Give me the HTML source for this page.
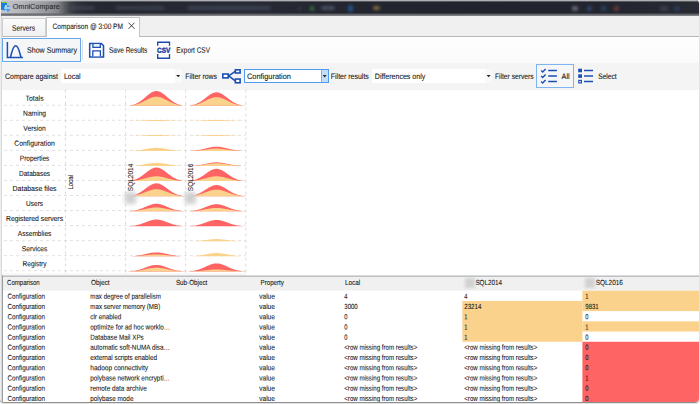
<!DOCTYPE html>
<html><head><meta charset="utf-8"><title>OmniCompare</title>
<style>
html,body{margin:0;padding:0;background:#fff;}
body{width:700px;height:404px;overflow:hidden;position:relative;font-family:"Liberation Sans",sans-serif;}
.win{position:absolute;left:0;top:0;width:699px;height:402px;border-radius:4px;overflow:hidden;background:#f0f0f0;box-shadow:0 0.3px 1.6px rgba(0,0,0,.55);}
.abs{position:absolute;}
.t{position:absolute;left:0;top:0;white-space:nowrap;line-height:12px;height:12px;transform-origin:0 0;-webkit-text-stroke:0.08px currentColor;}
svg{position:absolute;left:0;top:0;overflow:visible;}
</style></head><body>
<div class="win">

<div class="abs" style="left:0;top:0;width:700px;height:14.6px;background:linear-gradient(90deg,#c6c7ca 0px,#bbbcc0 14px,#a6a7ab 36px,#909196 52px,#83848a 58px,#5f6067 64px,#404249 70px,#2f313a 77px,#282a33 86px,#262831 100px,#252730 130px,#272b36 240px,#23262f 330px,#22242d 470px,#23252e 600px,#282b33 700px);"></div>
<div class="abs" style="left:0;top:0;width:700px;height:2px;background:linear-gradient(180deg,rgba(215,215,218,.95) 0,rgba(190,190,195,.75) 45%,rgba(150,150,155,0) 100%);"></div>
<div class="abs" style="left:0;top:12.6px;width:700px;height:3.3px;background:linear-gradient(180deg,rgba(90,92,98,0) 0,rgba(92,94,100,.85) 30%,#707176 70%,#8a8b8f 92%,#c0c0c0 100%);"></div>
<div class="abs" style="left:71.0px;top:5.55px;width:24px;height:4.5px;background:rgba(80,84,104,.45);filter:blur(1.5px);border-radius:2px;"></div>
<div class="abs" style="left:115.0px;top:5.55px;width:50px;height:4.5px;background:rgba(80,84,104,.45);filter:blur(1.5px);border-radius:2px;"></div>
<div class="abs" style="left:187.0px;top:5.55px;width:84px;height:4.5px;background:rgba(84,88,110,.45);filter:blur(1.5px);border-radius:2px;"></div>
<div class="abs" style="left:297.5px;top:6.5px;width:3px;height:3px;background:rgba(90,95,115,.5);filter:blur(1.5px);border-radius:2px;"></div>
<div class="abs" style="left:309.75px;top:5.5px;width:4.5px;height:5px;background:rgba(60,160,90,.6);filter:blur(1.5px);border-radius:2px;"></div>
<div class="abs" style="left:320.5px;top:5.75px;width:14px;height:4.5px;background:rgba(110,118,145,.5);filter:blur(1.5px);border-radius:2px;"></div>
<div class="abs" style="left:347.5px;top:5.0px;width:5px;height:7px;background:rgba(40,100,185,.65);filter:blur(1.5px);border-radius:2px;"></div>
<div class="abs" style="left:373.0px;top:5.75px;width:7px;height:4.5px;background:rgba(200,160,80,.55);filter:blur(1.5px);border-radius:2px;"></div>
<div class="abs" style="left:572.0px;top:6.0px;width:6px;height:5px;background:rgba(140,145,160,.6);filter:blur(1.5px);border-radius:2px;"></div>
<div class="abs" style="left:587.0px;top:6.25px;width:5px;height:4.5px;background:rgba(60,100,170,.5);filter:blur(1.5px);border-radius:2px;"></div>
<div class="abs" style="left:600.5px;top:6.25px;width:5px;height:4.5px;background:rgba(50,95,160,.5);filter:blur(1.5px);border-radius:2px;"></div>
<div class="abs" style="left:613.5px;top:6.25px;width:5px;height:4.5px;background:rgba(170,75,70,.5);filter:blur(1.5px);border-radius:2px;"></div>
<div class="abs" style="left:660.0px;top:6.25px;width:8px;height:4.5px;background:rgba(80,85,105,.45);filter:blur(1.5px);border-radius:2px;"></div>
<div class="abs" style="left:674.0px;top:6.25px;width:6px;height:4.5px;background:rgba(50,90,150,.4);filter:blur(1.5px);border-radius:2px;"></div>
<div class="abs" style="left:1.2px;top:2.3px;width:6px;height:7.6px;background:#1f80d8;border-radius:1px;filter:blur(.4px);"></div>
<div class="abs" style="left:1.9px;top:1.6px;width:5px;height:1.3px;background:#86c620;border-radius:1px;filter:blur(.35px);"></div>
<div class="abs" style="left:3.8px;top:4.6px;width:5.8px;height:7.2px;background:#4a9fe8;border-radius:3px;filter:blur(.7px);"></div>
<div class="abs" style="left:5.4px;top:4.9px;width:2px;height:2px;background:rgba(235,245,254,.85);border-radius:2px;filter:blur(.6px);"></div>
<div class="abs" style="left:7.6px;top:6.6px;width:2px;height:2.6px;background:rgba(225,240,253,.8);border-radius:2px;filter:blur(.6px);"></div>
<div class="abs" style="left:4.4px;top:7px;width:3.4px;height:1.6px;background:rgba(215,235,252,.7);border-radius:2px;filter:blur(.6px);"></div>
<div class="abs" style="left:4.6px;top:10px;width:2px;height:2px;background:rgba(225,240,253,.8);border-radius:2px;filter:blur(.6px);"></div>
<span class="t" style="font-size:7.9px;color:#16171d;transform:translate(12.80px,0.94px) rotate(0.05deg) scaleX(0.9150);-webkit-text-stroke:0.05px #16171d;filter:blur(.25px);">OmniCompare</span>
<div class="abs" style="left:0;top:16px;width:700px;height:21px;background:#f0f0f0;"></div>
<div class="abs" style="left:0;top:36.4px;width:700px;height:1px;background:#b9b9b9;"></div>
<div class="abs" style="left:1.8px;top:18.3px;width:44px;height:18px;border:1px solid #d0d0d0;border-bottom:none;background:linear-gradient(180deg,#fbfbfb,#f0f0f0);box-sizing:border-box;"></div>
<span class="t" style="font-size:7.9px;color:#151515;transform:translate(12.10px,22.69px) rotate(0.05deg) scaleX(0.8487);">Servers</span>
<div class="abs" style="left:46.2px;top:16.6px;width:93.6px;height:21px;border:1px solid #c4c4c4;border-bottom:none;background:#fff;box-sizing:border-box;"></div>
<span class="t" style="font-size:7.9px;color:#151515;transform:translate(52.60px,20.94px) rotate(0.05deg) scaleX(0.8351);">Comparison @ 3:00 PM</span>
<svg width="700" height="404"><path d="M128.5,22.7L134.5,28.8M134.5,22.7L128.5,28.8" stroke="#333" stroke-width="0.9" fill="none"/></svg>
<div class="abs" style="left:0;top:37.2px;width:700px;height:26px;background:linear-gradient(180deg,#fefefe,#fbfbfb);"></div>
<div class="abs" style="left:0;top:63.2px;width:700px;height:27px;background:#f4f4f4;"></div>
<div class="abs" style="left:2.1px;top:38.2px;width:78.6px;height:23.8px;border:1px solid #66a7ee;background:#f5f6f8;box-sizing:border-box;"></div>
<div class="abs" style="left:82px;top:40px;width:1px;height:20px;background:#dcdcdc;"></div>
<span class="t" style="font-size:7.9px;color:#111;transform:translate(27.00px,44.69px) rotate(0.05deg) scaleX(0.8967);">Show Summary</span>
<span class="t" style="font-size:7.9px;color:#111;transform:translate(109.00px,44.69px) rotate(0.05deg) scaleX(0.8250);">Save Results</span>
<span class="t" style="font-size:7.9px;color:#111;transform:translate(176.30px,44.69px) rotate(0.05deg) scaleX(0.8165);">Export CSV</span>
<svg width="700" height="404">
<path d="M7.4,42V57.4H22.9" stroke="#1c4fb4" stroke-width="1.5" fill="none"/>
<path d="M10.4,57.3C12.2,51.8 12.7,45.8 15.7,45.8C18.7,45.8 19.2,51.8 21,57.3" stroke="#1c4fb4" stroke-width="1.5" fill="none"/>
<path d="M89.7,43.4H101.3L103.5,45.8V57H89.7Z" stroke="#1c4fb4" stroke-width="1.55" fill="#fff"/>
<path d="M92.9,44.1V47.3H100.3V44.1" stroke="#1c4fb4" stroke-width="1.3" fill="#e6ecf8"/>
<path d="M92.8,56.3V50.8H100.4V56.3" stroke="#1c4fb4" stroke-width="1.3" fill="#fff"/>
<path d="M157.7,45.7V42.2H169.5V45.7M157.7,54V58.2H169.5V54" stroke="#1a4ab0" stroke-width="1.35" fill="none"/>
</svg>
<span class="t" style="font-size:7.2px;color:#1440a8;font-weight:bold;transform:translate(157.00px,44.69px) rotate(0.05deg) scaleX(0.8983);-webkit-text-stroke:0.4px #1440a8;">CSV</span>
<div class="abs" style="left:61px;top:69px;width:121px;height:14px;background:#f9f9f9;"></div>
<div class="abs" style="left:61px;top:69px;width:114px;height:14px;background:#fff;"></div>
<div class="abs" style="left:372px;top:69px;width:120px;height:14px;background:#f9f9f9;"></div>
<div class="abs" style="left:372px;top:69px;width:113px;height:14px;background:#fff;"></div>
<div class="abs" style="left:244px;top:69px;width:84.5px;height:14.2px;border:1px solid #4f9cf0;background:#fff;box-sizing:border-box;"></div>
<div class="abs" style="left:321px;top:70px;width:7px;height:12.2px;background:#c4ddf9;border-left:1px solid #77b0f0;box-sizing:border-box;"></div>
<div class="abs" style="left:535.9px;top:63.9px;width:38px;height:24.1px;border:1px solid #7fb5ee;background:#f5f6f8;box-sizing:border-box;"></div>
<span class="t" style="font-size:7.9px;color:#111;transform:translate(5.00px,70.94px) rotate(0.05deg) scaleX(0.8810);">Compare against</span>
<span class="t" style="font-size:7.9px;color:#111;transform:translate(63.90px,70.94px) rotate(0.05deg) scaleX(0.8842);">Local</span>
<span class="t" style="font-size:7.9px;color:#111;transform:translate(185.30px,70.94px) rotate(0.05deg) scaleX(0.8701);">Filter rows</span>
<span class="t" style="font-size:7.9px;color:#111;transform:translate(247.00px,70.94px) rotate(0.05deg) scaleX(0.9363);">Configuration</span>
<span class="t" style="font-size:7.9px;color:#111;transform:translate(330.80px,70.94px) rotate(0.05deg) scaleX(0.8857);">Filter results</span>
<span class="t" style="font-size:7.9px;color:#111;transform:translate(374.80px,70.94px) rotate(0.05deg) scaleX(0.8956);">Differences only</span>
<span class="t" style="font-size:7.9px;color:#111;transform:translate(494.90px,70.94px) rotate(0.05deg) scaleX(0.8499);">Filter servers</span>
<span class="t" style="font-size:7.9px;color:#111;transform:translate(561.60px,70.94px) rotate(0.05deg) scaleX(0.9112);">All</span>
<span class="t" style="font-size:7.9px;color:#111;transform:translate(598.20px,70.94px) rotate(0.05deg) scaleX(0.8426);">Select</span>
<svg width="700" height="404">
<path d="M176.2,75h4l-2,2.3z" fill="#222"/>
<path d="M322.8,75.1h3.8l-1.9,2.3z" fill="#222"/>
<path d="M486.6,75h4l-2,2.3z" fill="#222"/>
<path d="M228.8,75.95L235.2,71.4M228.8,75.95L235.2,80.95" stroke="#1c4fb4" stroke-width="1.5" fill="none"/>
<rect x="222.8" y="74" width="5.4" height="3.9" stroke="#1c4fb4" stroke-width="1.6" fill="#fff"/>
<rect x="235.4" y="69.8" width="4.7" height="3.2" stroke="#1c4fb4" stroke-width="1.6" fill="#fff"/>
<rect x="235.4" y="79.05" width="4.7" height="3.75" stroke="#1c4fb4" stroke-width="1.6" fill="#fff"/>
<path d="M548.2,70.5H556.9M548.2,76H556.9M548.2,81.5H556.9" stroke="#1c4fb4" stroke-width="1.4" fill="none"/>
<path d="M541.2,70.6l1.5,1.5l2.9,-3.1M541.2,76.1l1.5,1.5l2.9,-3.1M541.2,81.6l1.5,1.5l2.9,-3.1" stroke="#1c4fb4" stroke-width="1.4" fill="none"/>
<path d="M584,70.5H593.1M584,76H593.1M584,81.5H593.1" stroke="#1c4fb4" stroke-width="1.4" fill="none"/>
<rect x="578.2" y="68.7" width="3.8" height="3.6" fill="#1c4fb4"/><rect x="578.2" y="74.3" width="3.8" height="3.6" fill="#1c4fb4"/>
<rect x="578.8" y="80.4" width="2.6" height="2.5" fill="#fff" stroke="#1c4fb4" stroke-width="1.2"/>
</svg>
<div class="abs" style="left:0;top:90px;width:700px;height:186px;background:#fff;"></div>
<div class="abs" style="left:0;top:273px;width:246px;height:3px;background:#f8f8f8;"></div>
<svg width="700" height="404"><path d="M65.5,89.6V274.2" stroke="#d2d2d2" stroke-width="0.8" stroke-dasharray="3,3" fill="none"/><path d="M125.6,89.6V274.2" stroke="#d2d2d2" stroke-width="0.8" stroke-dasharray="3,3" fill="none"/><path d="M185.7,89.6V274.2" stroke="#d2d2d2" stroke-width="0.8" stroke-dasharray="3,3" fill="none"/><path d="M245.9,89.6V274.2" stroke="#d2d2d2" stroke-width="0.8" stroke-dasharray="3,3" fill="none"/><path d="M4,105.20H245.9" stroke="#d9d9d9" stroke-width="0.8" stroke-dasharray="3,3" fill="none"/><path d="M4,120.25H245.9" stroke="#d9d9d9" stroke-width="0.8" stroke-dasharray="3,3" fill="none"/><path d="M4,135.30H245.9" stroke="#d9d9d9" stroke-width="0.8" stroke-dasharray="3,3" fill="none"/><path d="M4,150.35H245.9" stroke="#d9d9d9" stroke-width="0.8" stroke-dasharray="3,3" fill="none"/><path d="M4,165.40H245.9" stroke="#d9d9d9" stroke-width="0.8" stroke-dasharray="3,3" fill="none"/><path d="M4,180.45H245.9" stroke="#d9d9d9" stroke-width="0.8" stroke-dasharray="3,3" fill="none"/><path d="M4,195.50H245.9" stroke="#d9d9d9" stroke-width="0.8" stroke-dasharray="3,3" fill="none"/><path d="M4,210.55H245.9" stroke="#d9d9d9" stroke-width="0.8" stroke-dasharray="3,3" fill="none"/><path d="M4,225.60H245.9" stroke="#d9d9d9" stroke-width="0.8" stroke-dasharray="3,3" fill="none"/><path d="M4,240.65H245.9" stroke="#d9d9d9" stroke-width="0.8" stroke-dasharray="3,3" fill="none"/><path d="M4,255.70H245.9" stroke="#d9d9d9" stroke-width="0.8" stroke-dasharray="3,3" fill="none"/><path d="M4,270.75H245.9" stroke="#d9d9d9" stroke-width="0.8" stroke-dasharray="3,3" fill="none"/><path d="M127.9,105.85L127.9,105.85L128.4,105.79L128.9,105.72L129.4,105.65L129.9,105.57L130.4,105.48L130.9,105.38L131.4,105.27L131.9,105.15L132.4,105.03L132.9,104.89L133.4,104.74L133.9,104.58L134.4,104.40L134.9,104.21L135.4,104.01L135.9,103.80L136.4,103.57L136.9,103.33L137.4,103.07L137.9,102.80L138.4,102.51L138.9,102.21L139.4,101.90L139.9,101.57L140.4,101.22L140.9,100.87L141.4,100.50L141.9,100.12L142.4,99.73L142.9,99.33L143.4,98.92L143.9,98.50L144.4,98.08L144.9,97.66L145.4,97.23L145.9,96.80L146.4,96.37L146.9,95.95L147.4,95.53L147.9,95.12L148.4,94.71L148.9,94.32L149.4,93.94L149.9,93.58L150.4,93.23L150.9,92.91L151.4,92.60L151.9,92.32L152.4,92.06L152.9,91.83L153.4,91.63L153.9,91.45L154.4,91.31L154.9,91.20L155.4,91.12L155.9,91.07L156.4,91.05L156.9,91.07L157.4,91.12L157.9,91.20L158.4,91.31L158.9,91.45L159.4,91.63L159.9,91.83L160.4,92.06L160.9,92.32L161.4,92.60L161.9,92.91L162.4,93.23L162.9,93.58L163.4,93.94L163.9,94.32L164.4,94.71L164.9,95.12L165.4,95.53L165.9,95.95L166.4,96.37L166.9,96.80L167.4,97.23L167.9,97.66L168.4,98.08L168.9,98.50L169.4,98.92L169.9,99.33L170.4,99.73L170.9,100.12L171.4,100.50L171.9,100.87L172.4,101.22L172.9,101.57L173.4,101.90L173.9,102.21L174.4,102.51L174.9,102.80L175.4,103.07L175.9,103.33L176.4,103.57L176.9,103.80L177.4,104.01L177.9,104.21L178.4,104.40L178.9,104.58L179.4,104.74L179.9,104.89L180.4,105.03L180.9,105.15L181.4,105.27L181.9,105.38L182.4,105.48L182.9,105.57L183.4,105.65L183.9,105.72L184.4,105.79L184.9,105.85L184.9,105.85Z" fill="#ff6464"/><path d="M127.9,105.85L127.9,105.85L128.4,105.81L128.9,105.77L129.4,105.72L129.9,105.67L130.4,105.62L130.9,105.56L131.4,105.49L131.9,105.42L132.4,105.34L132.9,105.25L133.4,105.16L133.9,105.06L134.4,104.95L134.9,104.83L135.4,104.71L135.9,104.58L136.4,104.43L136.9,104.28L137.4,104.12L137.9,103.95L138.4,103.78L138.9,103.59L139.4,103.39L139.9,103.19L140.4,102.97L140.9,102.75L141.4,102.52L141.9,102.29L142.4,102.04L142.9,101.80L143.4,101.54L143.9,101.28L144.4,101.02L144.9,100.76L145.4,100.49L145.9,100.22L146.4,99.96L146.9,99.70L147.4,99.43L147.9,99.18L148.4,98.93L148.9,98.68L149.4,98.45L149.9,98.22L150.4,98.01L150.9,97.80L151.4,97.61L151.9,97.44L152.4,97.28L152.9,97.14L153.4,97.01L153.9,96.90L154.4,96.81L154.9,96.74L155.4,96.69L155.9,96.66L156.4,96.65L156.9,96.66L157.4,96.69L157.9,96.74L158.4,96.81L158.9,96.90L159.4,97.01L159.9,97.14L160.4,97.28L160.9,97.44L161.4,97.61L161.9,97.80L162.4,98.01L162.9,98.22L163.4,98.45L163.9,98.68L164.4,98.93L164.9,99.18L165.4,99.43L165.9,99.70L166.4,99.96L166.9,100.22L167.4,100.49L167.9,100.76L168.4,101.02L168.9,101.28L169.4,101.54L169.9,101.80L170.4,102.04L170.9,102.29L171.4,102.52L171.9,102.75L172.4,102.97L172.9,103.19L173.4,103.39L173.9,103.59L174.4,103.78L174.9,103.95L175.4,104.12L175.9,104.28L176.4,104.43L176.9,104.58L177.4,104.71L177.9,104.83L178.4,104.95L178.9,105.06L179.4,105.16L179.9,105.25L180.4,105.34L180.9,105.42L181.4,105.49L181.9,105.56L182.4,105.62L182.9,105.67L183.4,105.72L183.9,105.77L184.4,105.81L184.9,105.85L184.9,105.85Z" fill="#fad28c"/><path d="M188.0,105.85L188.0,105.85L188.5,105.79L189.0,105.73L189.5,105.67L190.0,105.59L190.5,105.51L191.0,105.42L191.5,105.32L192.0,105.22L192.5,105.10L193.0,104.97L193.5,104.84L194.0,104.69L194.5,104.53L195.0,104.36L195.5,104.18L196.0,103.98L196.5,103.77L197.0,103.55L197.5,103.31L198.0,103.07L198.5,102.81L199.0,102.53L199.5,102.24L200.0,101.94L200.5,101.63L201.0,101.31L201.5,100.97L202.0,100.62L202.5,100.27L203.0,99.90L203.5,99.53L204.0,99.15L204.5,98.77L205.0,98.38L205.5,97.99L206.0,97.60L206.5,97.21L207.0,96.82L207.5,96.44L208.0,96.06L208.5,95.69L209.0,95.33L209.5,94.99L210.0,94.66L210.5,94.34L211.0,94.04L211.5,93.77L212.0,93.51L212.5,93.27L213.0,93.06L213.5,92.88L214.0,92.72L214.5,92.59L215.0,92.48L215.5,92.41L216.0,92.36L216.5,92.35L217.0,92.36L217.5,92.41L218.0,92.48L218.5,92.59L219.0,92.72L219.5,92.88L220.0,93.06L220.5,93.27L221.0,93.51L221.5,93.77L222.0,94.04L222.5,94.34L223.0,94.66L223.5,94.99L224.0,95.33L224.5,95.69L225.0,96.06L225.5,96.44L226.0,96.82L226.5,97.21L227.0,97.60L227.5,97.99L228.0,98.38L228.5,98.77L229.0,99.15L229.5,99.53L230.0,99.90L230.5,100.27L231.0,100.62L231.5,100.97L232.0,101.31L232.5,101.63L233.0,101.94L233.5,102.24L234.0,102.53L234.5,102.81L235.0,103.07L235.5,103.31L236.0,103.55L236.5,103.77L237.0,103.98L237.5,104.18L238.0,104.36L238.5,104.53L239.0,104.69L239.5,104.84L240.0,104.97L240.5,105.10L241.0,105.22L241.5,105.32L242.0,105.42L242.5,105.51L243.0,105.59L243.5,105.67L244.0,105.73L244.5,105.79L245.0,105.85L245.0,105.85Z" fill="#ff6464"/><path d="M188.0,105.85L188.0,105.85L188.5,105.81L189.0,105.78L189.5,105.73L190.0,105.68L190.5,105.63L191.0,105.57L191.5,105.51L192.0,105.44L192.5,105.37L193.0,105.28L193.5,105.20L194.0,105.10L194.5,105.00L195.0,104.89L195.5,104.77L196.0,104.64L196.5,104.51L197.0,104.37L197.5,104.22L198.0,104.06L198.5,103.89L199.0,103.71L199.5,103.53L200.0,103.33L200.5,103.13L201.0,102.92L201.5,102.70L202.0,102.48L202.5,102.25L203.0,102.02L203.5,101.78L204.0,101.53L204.5,101.28L205.0,101.03L205.5,100.78L206.0,100.53L206.5,100.28L207.0,100.03L207.5,99.78L208.0,99.54L208.5,99.30L209.0,99.07L209.5,98.85L210.0,98.64L210.5,98.43L211.0,98.24L211.5,98.06L212.0,97.90L212.5,97.75L213.0,97.61L213.5,97.49L214.0,97.39L214.5,97.30L215.0,97.24L215.5,97.19L216.0,97.16L216.5,97.15L217.0,97.16L217.5,97.19L218.0,97.24L218.5,97.30L219.0,97.39L219.5,97.49L220.0,97.61L220.5,97.75L221.0,97.90L221.5,98.06L222.0,98.24L222.5,98.43L223.0,98.64L223.5,98.85L224.0,99.07L224.5,99.30L225.0,99.54L225.5,99.78L226.0,100.03L226.5,100.28L227.0,100.53L227.5,100.78L228.0,101.03L228.5,101.28L229.0,101.53L229.5,101.78L230.0,102.02L230.5,102.25L231.0,102.48L231.5,102.70L232.0,102.92L232.5,103.13L233.0,103.33L233.5,103.53L234.0,103.71L234.5,103.89L235.0,104.06L235.5,104.22L236.0,104.37L236.5,104.51L237.0,104.64L237.5,104.77L238.0,104.89L238.5,105.00L239.0,105.10L239.5,105.20L240.0,105.28L240.5,105.37L241.0,105.44L241.5,105.51L242.0,105.57L242.5,105.63L243.0,105.68L243.5,105.73L244.0,105.78L244.5,105.81L245.0,105.85L245.0,105.85Z" fill="#fad28c"/><path d="M127.9,120.90L127.9,120.90L128.4,120.90L128.9,120.89L129.4,120.89L129.9,120.88L130.4,120.87L130.9,120.87L131.4,120.86L131.9,120.85L132.4,120.84L132.9,120.84L133.4,120.82L133.9,120.81L134.4,120.80L134.9,120.79L135.4,120.78L135.9,120.76L136.4,120.75L136.9,120.73L137.4,120.71L137.9,120.69L138.4,120.67L138.9,120.65L139.4,120.63L139.9,120.61L140.4,120.59L140.9,120.56L141.4,120.54L141.9,120.51L142.4,120.49L142.9,120.46L143.4,120.43L143.9,120.40L144.4,120.38L144.9,120.35L145.4,120.32L145.9,120.29L146.4,120.26L146.9,120.23L147.4,120.20L147.9,120.17L148.4,120.15L148.9,120.12L149.4,120.10L149.9,120.07L150.4,120.05L150.9,120.03L151.4,120.00L151.9,119.99L152.4,119.97L152.9,119.95L153.4,119.94L153.9,119.93L154.4,119.92L154.9,119.91L155.4,119.90L155.9,119.90L156.4,119.90L156.9,119.90L157.4,119.90L157.9,119.91L158.4,119.92L158.9,119.93L159.4,119.94L159.9,119.95L160.4,119.97L160.9,119.99L161.4,120.00L161.9,120.03L162.4,120.05L162.9,120.07L163.4,120.10L163.9,120.12L164.4,120.15L164.9,120.17L165.4,120.20L165.9,120.23L166.4,120.26L166.9,120.29L167.4,120.32L167.9,120.35L168.4,120.38L168.9,120.40L169.4,120.43L169.9,120.46L170.4,120.49L170.9,120.51L171.4,120.54L171.9,120.56L172.4,120.59L172.9,120.61L173.4,120.63L173.9,120.65L174.4,120.67L174.9,120.69L175.4,120.71L175.9,120.73L176.4,120.75L176.9,120.76L177.4,120.78L177.9,120.79L178.4,120.80L178.9,120.81L179.4,120.82L179.9,120.84L180.4,120.84L180.9,120.85L181.4,120.86L181.9,120.87L182.4,120.87L182.9,120.88L183.4,120.89L183.9,120.89L184.4,120.90L184.9,120.90L184.9,120.90Z" fill="#fad28c"/><path d="M188.0,120.90L188.0,120.90L188.5,120.90L189.0,120.89L189.5,120.89L190.0,120.88L190.5,120.87L191.0,120.87L191.5,120.86L192.0,120.85L192.5,120.84L193.0,120.84L193.5,120.82L194.0,120.81L194.5,120.80L195.0,120.79L195.5,120.78L196.0,120.76L196.5,120.75L197.0,120.73L197.5,120.71L198.0,120.69L198.5,120.67L199.0,120.65L199.5,120.63L200.0,120.61L200.5,120.59L201.0,120.56L201.5,120.54L202.0,120.51L202.5,120.49L203.0,120.46L203.5,120.43L204.0,120.40L204.5,120.38L205.0,120.35L205.5,120.32L206.0,120.29L206.5,120.26L207.0,120.23L207.5,120.20L208.0,120.17L208.5,120.15L209.0,120.12L209.5,120.10L210.0,120.07L210.5,120.05L211.0,120.03L211.5,120.00L212.0,119.99L212.5,119.97L213.0,119.95L213.5,119.94L214.0,119.93L214.5,119.92L215.0,119.91L215.5,119.90L216.0,119.90L216.5,119.90L217.0,119.90L217.5,119.90L218.0,119.91L218.5,119.92L219.0,119.93L219.5,119.94L220.0,119.95L220.5,119.97L221.0,119.99L221.5,120.00L222.0,120.03L222.5,120.05L223.0,120.07L223.5,120.10L224.0,120.12L224.5,120.15L225.0,120.17L225.5,120.20L226.0,120.23L226.5,120.26L227.0,120.29L227.5,120.32L228.0,120.35L228.5,120.38L229.0,120.40L229.5,120.43L230.0,120.46L230.5,120.49L231.0,120.51L231.5,120.54L232.0,120.56L232.5,120.59L233.0,120.61L233.5,120.63L234.0,120.65L234.5,120.67L235.0,120.69L235.5,120.71L236.0,120.73L236.5,120.75L237.0,120.76L237.5,120.78L238.0,120.79L238.5,120.80L239.0,120.81L239.5,120.82L240.0,120.84L240.5,120.84L241.0,120.85L241.5,120.86L242.0,120.87L242.5,120.87L243.0,120.88L243.5,120.89L244.0,120.89L244.5,120.90L245.0,120.90L245.0,120.90Z" fill="#fad28c"/><path d="M127.9,135.95L127.9,135.95L128.4,135.95L128.9,135.94L129.4,135.94L129.9,135.93L130.4,135.92L130.9,135.92L131.4,135.91L131.9,135.90L132.4,135.89L132.9,135.89L133.4,135.87L133.9,135.86L134.4,135.85L134.9,135.84L135.4,135.83L135.9,135.81L136.4,135.80L136.9,135.78L137.4,135.76L137.9,135.74L138.4,135.72L138.9,135.70L139.4,135.68L139.9,135.66L140.4,135.64L140.9,135.61L141.4,135.59L141.9,135.56L142.4,135.54L142.9,135.51L143.4,135.48L143.9,135.45L144.4,135.43L144.9,135.40L145.4,135.37L145.9,135.34L146.4,135.31L146.9,135.28L147.4,135.25L147.9,135.22L148.4,135.20L148.9,135.17L149.4,135.15L149.9,135.12L150.4,135.10L150.9,135.08L151.4,135.05L151.9,135.04L152.4,135.02L152.9,135.00L153.4,134.99L153.9,134.98L154.4,134.97L154.9,134.96L155.4,134.95L155.9,134.95L156.4,134.95L156.9,134.95L157.4,134.95L157.9,134.96L158.4,134.97L158.9,134.98L159.4,134.99L159.9,135.00L160.4,135.02L160.9,135.04L161.4,135.05L161.9,135.08L162.4,135.10L162.9,135.12L163.4,135.15L163.9,135.17L164.4,135.20L164.9,135.22L165.4,135.25L165.9,135.28L166.4,135.31L166.9,135.34L167.4,135.37L167.9,135.40L168.4,135.43L168.9,135.45L169.4,135.48L169.9,135.51L170.4,135.54L170.9,135.56L171.4,135.59L171.9,135.61L172.4,135.64L172.9,135.66L173.4,135.68L173.9,135.70L174.4,135.72L174.9,135.74L175.4,135.76L175.9,135.78L176.4,135.80L176.9,135.81L177.4,135.83L177.9,135.84L178.4,135.85L178.9,135.86L179.4,135.87L179.9,135.89L180.4,135.89L180.9,135.90L181.4,135.91L181.9,135.92L182.4,135.92L182.9,135.93L183.4,135.94L183.9,135.94L184.4,135.95L184.9,135.95L184.9,135.95Z" fill="#fad28c"/><path d="M188.0,135.95L188.0,135.95L188.5,135.95L189.0,135.94L189.5,135.94L190.0,135.93L190.5,135.92L191.0,135.92L191.5,135.91L192.0,135.90L192.5,135.89L193.0,135.89L193.5,135.87L194.0,135.86L194.5,135.85L195.0,135.84L195.5,135.83L196.0,135.81L196.5,135.80L197.0,135.78L197.5,135.76L198.0,135.74L198.5,135.72L199.0,135.70L199.5,135.68L200.0,135.66L200.5,135.64L201.0,135.61L201.5,135.59L202.0,135.56L202.5,135.54L203.0,135.51L203.5,135.48L204.0,135.45L204.5,135.43L205.0,135.40L205.5,135.37L206.0,135.34L206.5,135.31L207.0,135.28L207.5,135.25L208.0,135.22L208.5,135.20L209.0,135.17L209.5,135.15L210.0,135.12L210.5,135.10L211.0,135.08L211.5,135.05L212.0,135.04L212.5,135.02L213.0,135.00L213.5,134.99L214.0,134.98L214.5,134.97L215.0,134.96L215.5,134.95L216.0,134.95L216.5,134.95L217.0,134.95L217.5,134.95L218.0,134.96L218.5,134.97L219.0,134.98L219.5,134.99L220.0,135.00L220.5,135.02L221.0,135.04L221.5,135.05L222.0,135.08L222.5,135.10L223.0,135.12L223.5,135.15L224.0,135.17L224.5,135.20L225.0,135.22L225.5,135.25L226.0,135.28L226.5,135.31L227.0,135.34L227.5,135.37L228.0,135.40L228.5,135.43L229.0,135.45L229.5,135.48L230.0,135.51L230.5,135.54L231.0,135.56L231.5,135.59L232.0,135.61L232.5,135.64L233.0,135.66L233.5,135.68L234.0,135.70L234.5,135.72L235.0,135.74L235.5,135.76L236.0,135.78L236.5,135.80L237.0,135.81L237.5,135.83L238.0,135.84L238.5,135.85L239.0,135.86L239.5,135.87L240.0,135.89L240.5,135.89L241.0,135.90L241.5,135.91L242.0,135.92L242.5,135.92L243.0,135.93L243.5,135.94L244.0,135.94L244.5,135.95L245.0,135.95L245.0,135.95Z" fill="#fad28c"/><path d="M127.9,151.00L127.9,151.00L128.4,150.99L128.9,150.97L129.4,150.96L129.9,150.94L130.4,150.92L130.9,150.90L131.4,150.87L131.9,150.85L132.4,150.82L132.9,150.79L133.4,150.76L133.9,150.72L134.4,150.69L134.9,150.65L135.4,150.60L135.9,150.56L136.4,150.51L136.9,150.45L137.4,150.40L137.9,150.34L138.4,150.28L138.9,150.21L139.4,150.15L139.9,150.07L140.4,150.00L140.9,149.92L141.4,149.84L141.9,149.76L142.4,149.68L142.9,149.59L143.4,149.50L143.9,149.41L144.4,149.32L144.9,149.23L145.4,149.14L145.9,149.04L146.4,148.95L146.9,148.86L147.4,148.77L147.9,148.68L148.4,148.59L148.9,148.51L149.4,148.43L149.9,148.35L150.4,148.27L150.9,148.20L151.4,148.14L151.9,148.07L152.4,148.02L152.9,147.97L153.4,147.92L153.9,147.89L154.4,147.86L154.9,147.83L155.4,147.81L155.9,147.80L156.4,147.80L156.9,147.80L157.4,147.81L157.9,147.83L158.4,147.86L158.9,147.89L159.4,147.92L159.9,147.97L160.4,148.02L160.9,148.07L161.4,148.14L161.9,148.20L162.4,148.27L162.9,148.35L163.4,148.43L163.9,148.51L164.4,148.59L164.9,148.68L165.4,148.77L165.9,148.86L166.4,148.95L166.9,149.04L167.4,149.14L167.9,149.23L168.4,149.32L168.9,149.41L169.4,149.50L169.9,149.59L170.4,149.68L170.9,149.76L171.4,149.84L171.9,149.92L172.4,150.00L172.9,150.07L173.4,150.15L173.9,150.21L174.4,150.28L174.9,150.34L175.4,150.40L175.9,150.45L176.4,150.51L176.9,150.56L177.4,150.60L177.9,150.65L178.4,150.69L178.9,150.72L179.4,150.76L179.9,150.79L180.4,150.82L180.9,150.85L181.4,150.87L181.9,150.90L182.4,150.92L182.9,150.94L183.4,150.96L183.9,150.97L184.4,150.99L184.9,151.00L184.9,151.00Z" fill="#fad28c"/><path d="M188.0,151.00L188.0,151.00L188.5,150.98L189.0,150.96L189.5,150.94L190.0,150.92L190.5,150.89L191.0,150.86L191.5,150.83L192.0,150.80L192.5,150.76L193.0,150.72L193.5,150.68L194.0,150.63L194.5,150.58L195.0,150.52L195.5,150.47L196.0,150.40L196.5,150.34L197.0,150.27L197.5,150.19L198.0,150.11L198.5,150.03L199.0,149.94L199.5,149.85L200.0,149.76L200.5,149.66L201.0,149.55L201.5,149.45L202.0,149.34L202.5,149.22L203.0,149.11L203.5,148.99L204.0,148.87L204.5,148.74L205.0,148.62L205.5,148.50L206.0,148.37L206.5,148.25L207.0,148.12L207.5,148.00L208.0,147.88L208.5,147.76L209.0,147.65L209.5,147.54L210.0,147.43L210.5,147.33L211.0,147.24L211.5,147.15L212.0,147.07L212.5,146.99L213.0,146.93L213.5,146.87L214.0,146.82L214.5,146.78L215.0,146.74L215.5,146.72L216.0,146.70L216.5,146.70L217.0,146.70L217.5,146.72L218.0,146.74L218.5,146.78L219.0,146.82L219.5,146.87L220.0,146.93L220.5,146.99L221.0,147.07L221.5,147.15L222.0,147.24L222.5,147.33L223.0,147.43L223.5,147.54L224.0,147.65L224.5,147.76L225.0,147.88L225.5,148.00L226.0,148.12L226.5,148.25L227.0,148.37L227.5,148.50L228.0,148.62L228.5,148.74L229.0,148.87L229.5,148.99L230.0,149.11L230.5,149.22L231.0,149.34L231.5,149.45L232.0,149.55L232.5,149.66L233.0,149.76L233.5,149.85L234.0,149.94L234.5,150.03L235.0,150.11L235.5,150.19L236.0,150.27L236.5,150.34L237.0,150.40L237.5,150.47L238.0,150.52L238.5,150.58L239.0,150.63L239.5,150.68L240.0,150.72L240.5,150.76L241.0,150.80L241.5,150.83L242.0,150.86L242.5,150.89L243.0,150.92L243.5,150.94L244.0,150.96L244.5,150.98L245.0,151.00L245.0,151.00Z" fill="#ff6464"/><path d="M188.0,151.00L188.0,151.00L188.5,150.99L189.0,150.98L189.5,150.97L190.0,150.95L190.5,150.94L191.0,150.92L191.5,150.91L192.0,150.89L192.5,150.87L193.0,150.84L193.5,150.82L194.0,150.79L194.5,150.77L195.0,150.73L195.5,150.70L196.0,150.67L196.5,150.63L197.0,150.59L197.5,150.55L198.0,150.51L198.5,150.46L199.0,150.41L199.5,150.36L200.0,150.31L200.5,150.25L201.0,150.19L201.5,150.13L202.0,150.07L202.5,150.01L203.0,149.94L203.5,149.88L204.0,149.81L204.5,149.74L205.0,149.67L205.5,149.60L206.0,149.53L206.5,149.46L207.0,149.39L207.5,149.33L208.0,149.26L208.5,149.19L209.0,149.13L209.5,149.07L210.0,149.01L210.5,148.95L211.0,148.90L211.5,148.85L212.0,148.81L212.5,148.76L213.0,148.73L213.5,148.69L214.0,148.67L214.5,148.64L215.0,148.62L215.5,148.61L216.0,148.60L216.5,148.60L217.0,148.60L217.5,148.61L218.0,148.62L218.5,148.64L219.0,148.67L219.5,148.69L220.0,148.73L220.5,148.76L221.0,148.81L221.5,148.85L222.0,148.90L222.5,148.95L223.0,149.01L223.5,149.07L224.0,149.13L224.5,149.19L225.0,149.26L225.5,149.33L226.0,149.39L226.5,149.46L227.0,149.53L227.5,149.60L228.0,149.67L228.5,149.74L229.0,149.81L229.5,149.88L230.0,149.94L230.5,150.01L231.0,150.07L231.5,150.13L232.0,150.19L232.5,150.25L233.0,150.31L233.5,150.36L234.0,150.41L234.5,150.46L235.0,150.51L235.5,150.55L236.0,150.59L236.5,150.63L237.0,150.67L237.5,150.70L238.0,150.73L238.5,150.77L239.0,150.79L239.5,150.82L240.0,150.84L240.5,150.87L241.0,150.89L241.5,150.91L242.0,150.92L242.5,150.94L243.0,150.95L243.5,150.97L244.0,150.98L244.5,150.99L245.0,151.00L245.0,151.00Z" fill="#fad28c"/><path d="M127.9,166.05L127.9,166.05L128.4,166.04L128.9,166.02L129.4,166.01L129.9,165.99L130.4,165.97L130.9,165.95L131.4,165.92L131.9,165.90L132.4,165.87L132.9,165.84L133.4,165.81L133.9,165.77L134.4,165.74L134.9,165.70L135.4,165.65L135.9,165.61L136.4,165.56L136.9,165.50L137.4,165.45L137.9,165.39L138.4,165.33L138.9,165.26L139.4,165.20L139.9,165.12L140.4,165.05L140.9,164.97L141.4,164.89L141.9,164.81L142.4,164.73L142.9,164.64L143.4,164.55L143.9,164.46L144.4,164.37L144.9,164.28L145.4,164.19L145.9,164.09L146.4,164.00L146.9,163.91L147.4,163.82L147.9,163.73L148.4,163.64L148.9,163.56L149.4,163.48L149.9,163.40L150.4,163.32L150.9,163.25L151.4,163.19L151.9,163.12L152.4,163.07L152.9,163.02L153.4,162.97L153.9,162.94L154.4,162.91L154.9,162.88L155.4,162.86L155.9,162.85L156.4,162.85L156.9,162.85L157.4,162.86L157.9,162.88L158.4,162.91L158.9,162.94L159.4,162.97L159.9,163.02L160.4,163.07L160.9,163.12L161.4,163.19L161.9,163.25L162.4,163.32L162.9,163.40L163.4,163.48L163.9,163.56L164.4,163.64L164.9,163.73L165.4,163.82L165.9,163.91L166.4,164.00L166.9,164.09L167.4,164.19L167.9,164.28L168.4,164.37L168.9,164.46L169.4,164.55L169.9,164.64L170.4,164.73L170.9,164.81L171.4,164.89L171.9,164.97L172.4,165.05L172.9,165.12L173.4,165.20L173.9,165.26L174.4,165.33L174.9,165.39L175.4,165.45L175.9,165.50L176.4,165.56L176.9,165.61L177.4,165.65L177.9,165.70L178.4,165.74L178.9,165.77L179.4,165.81L179.9,165.84L180.4,165.87L180.9,165.90L181.4,165.92L181.9,165.95L182.4,165.97L182.9,165.99L183.4,166.01L183.9,166.02L184.4,166.04L184.9,166.05L184.9,166.05Z" fill="#fad28c"/><path d="M188.0,166.05L188.0,166.05L188.5,166.03L189.0,166.02L189.5,166.00L190.0,165.98L190.5,165.96L191.0,165.93L191.5,165.91L192.0,165.88L192.5,165.84L193.0,165.81L193.5,165.77L194.0,165.73L194.5,165.69L195.0,165.64L195.5,165.59L196.0,165.54L196.5,165.48L197.0,165.42L197.5,165.36L198.0,165.29L198.5,165.22L199.0,165.14L199.5,165.06L200.0,164.98L200.5,164.89L201.0,164.80L201.5,164.71L202.0,164.62L202.5,164.52L203.0,164.42L203.5,164.32L204.0,164.21L204.5,164.11L205.0,164.00L205.5,163.89L206.0,163.79L206.5,163.68L207.0,163.57L207.5,163.47L208.0,163.37L208.5,163.27L209.0,163.17L209.5,163.07L210.0,162.98L210.5,162.90L211.0,162.81L211.5,162.74L212.0,162.67L212.5,162.60L213.0,162.55L213.5,162.49L214.0,162.45L214.5,162.41L215.0,162.39L215.5,162.37L216.0,162.35L216.5,162.35L217.0,162.35L217.5,162.37L218.0,162.39L218.5,162.41L219.0,162.45L219.5,162.49L220.0,162.55L220.5,162.60L221.0,162.67L221.5,162.74L222.0,162.81L222.5,162.90L223.0,162.98L223.5,163.07L224.0,163.17L224.5,163.27L225.0,163.37L225.5,163.47L226.0,163.57L226.5,163.68L227.0,163.79L227.5,163.89L228.0,164.00L228.5,164.11L229.0,164.21L229.5,164.32L230.0,164.42L230.5,164.52L231.0,164.62L231.5,164.71L232.0,164.80L232.5,164.89L233.0,164.98L233.5,165.06L234.0,165.14L234.5,165.22L235.0,165.29L235.5,165.36L236.0,165.42L236.5,165.48L237.0,165.54L237.5,165.59L238.0,165.64L238.5,165.69L239.0,165.73L239.5,165.77L240.0,165.81L240.5,165.84L241.0,165.88L241.5,165.91L242.0,165.93L242.5,165.96L243.0,165.98L243.5,166.00L244.0,166.02L244.5,166.03L245.0,166.05L245.0,166.05Z" fill="#ff6464"/><path d="M188.0,166.05L188.0,166.05L188.5,166.04L189.0,166.03L189.5,166.01L190.0,166.00L190.5,165.98L191.0,165.96L191.5,165.94L192.0,165.92L192.5,165.89L193.0,165.87L193.5,165.84L194.0,165.81L194.5,165.78L195.0,165.74L195.5,165.70L196.0,165.66L196.5,165.62L197.0,165.57L197.5,165.52L198.0,165.47L198.5,165.42L199.0,165.36L199.5,165.30L200.0,165.24L200.5,165.17L201.0,165.11L201.5,165.04L202.0,164.97L202.5,164.89L203.0,164.82L203.5,164.74L204.0,164.66L204.5,164.58L205.0,164.50L205.5,164.42L206.0,164.34L206.5,164.26L207.0,164.18L207.5,164.10L208.0,164.02L208.5,163.94L209.0,163.87L209.5,163.80L210.0,163.73L210.5,163.66L211.0,163.60L211.5,163.54L212.0,163.49L212.5,163.44L213.0,163.40L213.5,163.36L214.0,163.33L214.5,163.30L215.0,163.28L215.5,163.26L216.0,163.25L216.5,163.25L217.0,163.25L217.5,163.26L218.0,163.28L218.5,163.30L219.0,163.33L219.5,163.36L220.0,163.40L220.5,163.44L221.0,163.49L221.5,163.54L222.0,163.60L222.5,163.66L223.0,163.73L223.5,163.80L224.0,163.87L224.5,163.94L225.0,164.02L225.5,164.10L226.0,164.18L226.5,164.26L227.0,164.34L227.5,164.42L228.0,164.50L228.5,164.58L229.0,164.66L229.5,164.74L230.0,164.82L230.5,164.89L231.0,164.97L231.5,165.04L232.0,165.11L232.5,165.17L233.0,165.24L233.5,165.30L234.0,165.36L234.5,165.42L235.0,165.47L235.5,165.52L236.0,165.57L236.5,165.62L237.0,165.66L237.5,165.70L238.0,165.74L238.5,165.78L239.0,165.81L239.5,165.84L240.0,165.87L240.5,165.89L241.0,165.92L241.5,165.94L242.0,165.96L242.5,165.98L243.0,166.00L243.5,166.01L244.0,166.03L244.5,166.04L245.0,166.05L245.0,166.05Z" fill="#fad28c"/><path d="M127.9,181.10L127.9,181.10L128.4,181.04L128.9,180.98L129.4,180.91L129.9,180.84L130.4,180.76L130.9,180.67L131.4,180.57L131.9,180.46L132.4,180.34L132.9,180.22L133.4,180.08L133.9,179.93L134.4,179.77L134.9,179.60L135.4,179.41L135.9,179.22L136.4,179.01L136.9,178.78L137.4,178.55L137.9,178.30L138.4,178.03L138.9,177.76L139.4,177.47L139.9,177.16L140.4,176.85L140.9,176.52L141.4,176.18L141.9,175.83L142.4,175.48L142.9,175.11L143.4,174.73L143.9,174.35L144.4,173.96L144.9,173.57L145.4,173.18L145.9,172.78L146.4,172.39L146.9,172.00L147.4,171.62L147.9,171.24L148.4,170.87L148.9,170.51L149.4,170.16L149.9,169.82L150.4,169.51L150.9,169.21L151.4,168.93L151.9,168.67L152.4,168.43L152.9,168.22L153.4,168.03L153.9,167.87L154.4,167.74L154.9,167.63L155.4,167.56L155.9,167.52L156.4,167.50L156.9,167.52L157.4,167.56L157.9,167.63L158.4,167.74L158.9,167.87L159.4,168.03L159.9,168.22L160.4,168.43L160.9,168.67L161.4,168.93L161.9,169.21L162.4,169.51L162.9,169.82L163.4,170.16L163.9,170.51L164.4,170.87L164.9,171.24L165.4,171.62L165.9,172.00L166.4,172.39L166.9,172.78L167.4,173.18L167.9,173.57L168.4,173.96L168.9,174.35L169.4,174.73L169.9,175.11L170.4,175.48L170.9,175.83L171.4,176.18L171.9,176.52L172.4,176.85L172.9,177.16L173.4,177.47L173.9,177.76L174.4,178.03L174.9,178.30L175.4,178.55L175.9,178.78L176.4,179.01L176.9,179.22L177.4,179.41L177.9,179.60L178.4,179.77L178.9,179.93L179.4,180.08L179.9,180.22L180.4,180.34L180.9,180.46L181.4,180.57L181.9,180.67L182.4,180.76L182.9,180.84L183.4,180.91L183.9,180.98L184.4,181.04L184.9,181.10L184.9,181.10Z" fill="#ff6464"/><path d="M127.9,181.10L127.9,181.10L128.4,181.08L128.9,181.06L129.4,181.03L129.9,181.01L130.4,180.98L130.9,180.95L131.4,180.91L131.9,180.87L132.4,180.83L132.9,180.79L133.4,180.74L133.9,180.69L134.4,180.63L134.9,180.57L135.4,180.50L135.9,180.43L136.4,180.36L136.9,180.28L137.4,180.20L137.9,180.11L138.4,180.02L138.9,179.92L139.4,179.82L139.9,179.71L140.4,179.60L140.9,179.48L141.4,179.36L141.9,179.24L142.4,179.11L142.9,178.98L143.4,178.85L143.9,178.72L144.4,178.58L144.9,178.44L145.4,178.30L145.9,178.17L146.4,178.03L146.9,177.89L147.4,177.75L147.9,177.62L148.4,177.49L148.9,177.36L149.4,177.24L149.9,177.12L150.4,177.01L150.9,176.90L151.4,176.80L151.9,176.71L152.4,176.63L152.9,176.55L153.4,176.49L153.9,176.43L154.4,176.38L154.9,176.35L155.4,176.32L155.9,176.31L156.4,176.30L156.9,176.31L157.4,176.32L157.9,176.35L158.4,176.38L158.9,176.43L159.4,176.49L159.9,176.55L160.4,176.63L160.9,176.71L161.4,176.80L161.9,176.90L162.4,177.01L162.9,177.12L163.4,177.24L163.9,177.36L164.4,177.49L164.9,177.62L165.4,177.75L165.9,177.89L166.4,178.03L166.9,178.17L167.4,178.30L167.9,178.44L168.4,178.58L168.9,178.72L169.4,178.85L169.9,178.98L170.4,179.11L170.9,179.24L171.4,179.36L171.9,179.48L172.4,179.60L172.9,179.71L173.4,179.82L173.9,179.92L174.4,180.02L174.9,180.11L175.4,180.20L175.9,180.28L176.4,180.36L176.9,180.43L177.4,180.50L177.9,180.57L178.4,180.63L178.9,180.69L179.4,180.74L179.9,180.79L180.4,180.83L180.9,180.87L181.4,180.91L181.9,180.95L182.4,180.98L182.9,181.01L183.4,181.03L183.9,181.06L184.4,181.08L184.9,181.10L184.9,181.10Z" fill="#fad28c"/><path d="M188.0,181.10L188.0,181.10L188.5,181.05L189.0,180.99L189.5,180.93L190.0,180.86L190.5,180.79L191.0,180.71L191.5,180.62L192.0,180.52L192.5,180.42L193.0,180.30L193.5,180.18L194.0,180.04L194.5,179.90L195.0,179.74L195.5,179.57L196.0,179.40L196.5,179.21L197.0,179.00L197.5,178.79L198.0,178.56L198.5,178.33L199.0,178.08L199.5,177.81L200.0,177.54L200.5,177.25L201.0,176.96L201.5,176.65L202.0,176.34L202.5,176.01L203.0,175.68L203.5,175.34L204.0,175.00L204.5,174.65L205.0,174.29L205.5,173.94L206.0,173.58L206.5,173.22L207.0,172.87L207.5,172.52L208.0,172.18L208.5,171.84L209.0,171.52L209.5,171.20L210.0,170.90L210.5,170.61L211.0,170.34L211.5,170.09L212.0,169.86L212.5,169.64L213.0,169.45L213.5,169.28L214.0,169.14L214.5,169.02L215.0,168.92L215.5,168.85L216.0,168.81L216.5,168.80L217.0,168.81L217.5,168.85L218.0,168.92L218.5,169.02L219.0,169.14L219.5,169.28L220.0,169.45L220.5,169.64L221.0,169.86L221.5,170.09L222.0,170.34L222.5,170.61L223.0,170.90L223.5,171.20L224.0,171.52L224.5,171.84L225.0,172.18L225.5,172.52L226.0,172.87L226.5,173.22L227.0,173.58L227.5,173.94L228.0,174.29L228.5,174.65L229.0,175.00L229.5,175.34L230.0,175.68L230.5,176.01L231.0,176.34L231.5,176.65L232.0,176.96L232.5,177.25L233.0,177.54L233.5,177.81L234.0,178.08L234.5,178.33L235.0,178.56L235.5,178.79L236.0,179.00L236.5,179.21L237.0,179.40L237.5,179.57L238.0,179.74L238.5,179.90L239.0,180.04L239.5,180.18L240.0,180.30L240.5,180.42L241.0,180.52L241.5,180.62L242.0,180.71L242.5,180.79L243.0,180.86L243.5,180.93L244.0,180.99L244.5,181.05L245.0,181.10L245.0,181.10Z" fill="#ff6464"/><path d="M188.0,181.10L188.0,181.10L188.5,181.08L189.0,181.06L189.5,181.03L190.0,181.01L190.5,180.98L191.0,180.95L191.5,180.91L192.0,180.87L192.5,180.83L193.0,180.79L193.5,180.74L194.0,180.69L194.5,180.63L195.0,180.57L195.5,180.50L196.0,180.43L196.5,180.36L197.0,180.28L197.5,180.20L198.0,180.11L198.5,180.02L199.0,179.92L199.5,179.82L200.0,179.71L200.5,179.60L201.0,179.48L201.5,179.36L202.0,179.24L202.5,179.11L203.0,178.98L203.5,178.85L204.0,178.72L204.5,178.58L205.0,178.44L205.5,178.30L206.0,178.17L206.5,178.03L207.0,177.89L207.5,177.75L208.0,177.62L208.5,177.49L209.0,177.36L209.5,177.24L210.0,177.12L210.5,177.01L211.0,176.90L211.5,176.80L212.0,176.71L212.5,176.63L213.0,176.55L213.5,176.49L214.0,176.43L214.5,176.38L215.0,176.35L215.5,176.32L216.0,176.31L216.5,176.30L217.0,176.31L217.5,176.32L218.0,176.35L218.5,176.38L219.0,176.43L219.5,176.49L220.0,176.55L220.5,176.63L221.0,176.71L221.5,176.80L222.0,176.90L222.5,177.01L223.0,177.12L223.5,177.24L224.0,177.36L224.5,177.49L225.0,177.62L225.5,177.75L226.0,177.89L226.5,178.03L227.0,178.17L227.5,178.30L228.0,178.44L228.5,178.58L229.0,178.72L229.5,178.85L230.0,178.98L230.5,179.11L231.0,179.24L231.5,179.36L232.0,179.48L232.5,179.60L233.0,179.71L233.5,179.82L234.0,179.92L234.5,180.02L235.0,180.11L235.5,180.20L236.0,180.28L236.5,180.36L237.0,180.43L237.5,180.50L238.0,180.57L238.5,180.63L239.0,180.69L239.5,180.74L240.0,180.79L240.5,180.83L241.0,180.87L241.5,180.91L242.0,180.95L242.5,180.98L243.0,181.01L243.5,181.03L244.0,181.06L244.5,181.08L245.0,181.10L245.0,181.10Z" fill="#fad28c"/><path d="M127.9,196.15L127.9,196.15L128.4,196.10L128.9,196.04L129.4,195.98L129.9,195.91L130.4,195.83L130.9,195.74L131.4,195.65L131.9,195.55L132.4,195.44L132.9,195.32L133.4,195.19L133.9,195.05L134.4,194.90L134.9,194.74L135.4,194.56L135.9,194.38L136.4,194.18L136.9,193.97L137.4,193.75L137.9,193.51L138.4,193.26L138.9,193.00L139.4,192.73L139.9,192.45L140.4,192.15L140.9,191.84L141.4,191.52L141.9,191.19L142.4,190.86L142.9,190.51L143.4,190.16L143.9,189.80L144.4,189.43L144.9,189.06L145.4,188.69L145.9,188.32L146.4,187.95L146.9,187.59L147.4,187.22L147.9,186.87L148.4,186.52L148.9,186.18L149.4,185.85L149.9,185.54L150.4,185.24L150.9,184.96L151.4,184.69L151.9,184.45L152.4,184.23L152.9,184.03L153.4,183.85L153.9,183.70L154.4,183.57L154.9,183.48L155.4,183.41L155.9,183.36L156.4,183.35L156.9,183.36L157.4,183.41L157.9,183.48L158.4,183.57L158.9,183.70L159.4,183.85L159.9,184.03L160.4,184.23L160.9,184.45L161.4,184.69L161.9,184.96L162.4,185.24L162.9,185.54L163.4,185.85L163.9,186.18L164.4,186.52L164.9,186.87L165.4,187.22L165.9,187.59L166.4,187.95L166.9,188.32L167.4,188.69L167.9,189.06L168.4,189.43L168.9,189.80L169.4,190.16L169.9,190.51L170.4,190.86L170.9,191.19L171.4,191.52L171.9,191.84L172.4,192.15L172.9,192.45L173.4,192.73L173.9,193.00L174.4,193.26L174.9,193.51L175.4,193.75L175.9,193.97L176.4,194.18L176.9,194.38L177.4,194.56L177.9,194.74L178.4,194.90L178.9,195.05L179.4,195.19L179.9,195.32L180.4,195.44L180.9,195.55L181.4,195.65L181.9,195.74L182.4,195.83L182.9,195.91L183.4,195.98L183.9,196.04L184.4,196.10L184.9,196.15L184.9,196.15Z" fill="#ff6464"/><path d="M127.9,196.15L127.9,196.15L128.4,196.12L128.9,196.09L129.4,196.06L129.9,196.02L130.4,195.98L130.9,195.93L131.4,195.88L131.9,195.83L132.4,195.77L132.9,195.70L133.4,195.63L133.9,195.56L134.4,195.47L134.9,195.39L135.4,195.29L135.9,195.19L136.4,195.09L136.9,194.97L137.4,194.85L137.9,194.73L138.4,194.59L138.9,194.45L139.4,194.31L139.9,194.15L140.4,193.99L140.9,193.83L141.4,193.66L141.9,193.48L142.4,193.30L142.9,193.11L143.4,192.92L143.9,192.73L144.4,192.53L144.9,192.33L145.4,192.13L145.9,191.93L146.4,191.73L146.9,191.53L147.4,191.34L147.9,191.15L148.4,190.96L148.9,190.78L149.4,190.60L149.9,190.43L150.4,190.27L150.9,190.12L151.4,189.97L151.9,189.84L152.4,189.72L152.9,189.61L153.4,189.52L153.9,189.44L154.4,189.37L154.9,189.32L155.4,189.28L155.9,189.26L156.4,189.25L156.9,189.26L157.4,189.28L157.9,189.32L158.4,189.37L158.9,189.44L159.4,189.52L159.9,189.61L160.4,189.72L160.9,189.84L161.4,189.97L161.9,190.12L162.4,190.27L162.9,190.43L163.4,190.60L163.9,190.78L164.4,190.96L164.9,191.15L165.4,191.34L165.9,191.53L166.4,191.73L166.9,191.93L167.4,192.13L167.9,192.33L168.4,192.53L168.9,192.73L169.4,192.92L169.9,193.11L170.4,193.30L170.9,193.48L171.4,193.66L171.9,193.83L172.4,193.99L172.9,194.15L173.4,194.31L173.9,194.45L174.4,194.59L174.9,194.73L175.4,194.85L175.9,194.97L176.4,195.09L176.9,195.19L177.4,195.29L177.9,195.39L178.4,195.47L178.9,195.56L179.4,195.63L179.9,195.70L180.4,195.77L180.9,195.83L181.4,195.88L181.9,195.93L182.4,195.98L182.9,196.02L183.4,196.06L183.9,196.09L184.4,196.12L184.9,196.15L184.9,196.15Z" fill="#fad28c"/><path d="M188.0,196.15L188.0,196.15L188.5,196.10L189.0,196.05L189.5,196.00L190.0,195.94L190.5,195.87L191.0,195.80L191.5,195.72L192.0,195.63L192.5,195.53L193.0,195.43L193.5,195.32L194.0,195.19L194.5,195.06L195.0,194.92L195.5,194.77L196.0,194.61L196.5,194.44L197.0,194.26L197.5,194.07L198.0,193.86L198.5,193.65L199.0,193.42L199.5,193.18L200.0,192.94L200.5,192.68L201.0,192.41L201.5,192.14L202.0,191.85L202.5,191.56L203.0,191.26L203.5,190.95L204.0,190.64L204.5,190.32L205.0,190.01L205.5,189.68L206.0,189.36L206.5,189.04L207.0,188.72L207.5,188.41L208.0,188.10L208.5,187.80L209.0,187.50L209.5,187.22L210.0,186.95L210.5,186.69L211.0,186.44L211.5,186.21L212.0,186.00L212.5,185.81L213.0,185.64L213.5,185.48L214.0,185.35L214.5,185.24L215.0,185.16L215.5,185.10L216.0,185.06L216.5,185.05L217.0,185.06L217.5,185.10L218.0,185.16L218.5,185.24L219.0,185.35L219.5,185.48L220.0,185.64L220.5,185.81L221.0,186.00L221.5,186.21L222.0,186.44L222.5,186.69L223.0,186.95L223.5,187.22L224.0,187.50L224.5,187.80L225.0,188.10L225.5,188.41L226.0,188.72L226.5,189.04L227.0,189.36L227.5,189.68L228.0,190.01L228.5,190.32L229.0,190.64L229.5,190.95L230.0,191.26L230.5,191.56L231.0,191.85L231.5,192.14L232.0,192.41L232.5,192.68L233.0,192.94L233.5,193.18L234.0,193.42L234.5,193.65L235.0,193.86L235.5,194.07L236.0,194.26L236.5,194.44L237.0,194.61L237.5,194.77L238.0,194.92L238.5,195.06L239.0,195.19L239.5,195.32L240.0,195.43L240.5,195.53L241.0,195.63L241.5,195.72L242.0,195.80L242.5,195.87L243.0,195.94L243.5,196.00L244.0,196.05L244.5,196.10L245.0,196.15L245.0,196.15Z" fill="#ff6464"/><path d="M188.0,196.15L188.0,196.15L188.5,196.12L189.0,196.09L189.5,196.06L190.0,196.03L190.5,195.99L191.0,195.94L191.5,195.90L192.0,195.84L192.5,195.79L193.0,195.73L193.5,195.66L194.0,195.59L194.5,195.51L195.0,195.43L195.5,195.34L196.0,195.25L196.5,195.15L197.0,195.04L197.5,194.93L198.0,194.81L198.5,194.68L199.0,194.55L199.5,194.41L200.0,194.27L200.5,194.12L201.0,193.96L201.5,193.80L202.0,193.63L202.5,193.46L203.0,193.29L203.5,193.11L204.0,192.92L204.5,192.74L205.0,192.55L205.5,192.36L206.0,192.18L206.5,191.99L207.0,191.80L207.5,191.62L208.0,191.44L208.5,191.26L209.0,191.09L209.5,190.92L210.0,190.76L210.5,190.61L211.0,190.47L211.5,190.33L212.0,190.21L212.5,190.09L213.0,189.99L213.5,189.90L214.0,189.83L214.5,189.76L215.0,189.71L215.5,189.68L216.0,189.66L216.5,189.65L217.0,189.66L217.5,189.68L218.0,189.71L218.5,189.76L219.0,189.83L219.5,189.90L220.0,189.99L220.5,190.09L221.0,190.21L221.5,190.33L222.0,190.47L222.5,190.61L223.0,190.76L223.5,190.92L224.0,191.09L224.5,191.26L225.0,191.44L225.5,191.62L226.0,191.80L226.5,191.99L227.0,192.18L227.5,192.36L228.0,192.55L228.5,192.74L229.0,192.92L229.5,193.11L230.0,193.29L230.5,193.46L231.0,193.63L231.5,193.80L232.0,193.96L232.5,194.12L233.0,194.27L233.5,194.41L234.0,194.55L234.5,194.68L235.0,194.81L235.5,194.93L236.0,195.04L236.5,195.15L237.0,195.25L237.5,195.34L238.0,195.43L238.5,195.51L239.0,195.59L239.5,195.66L240.0,195.73L240.5,195.79L241.0,195.84L241.5,195.90L242.0,195.94L242.5,195.99L243.0,196.03L243.5,196.06L244.0,196.09L244.5,196.12L245.0,196.15L245.0,196.15Z" fill="#fad28c"/><path d="M127.9,211.20L127.9,211.20L128.4,211.17L128.9,211.14L129.4,211.10L129.9,211.06L130.4,211.01L130.9,210.96L131.4,210.91L131.9,210.85L132.4,210.79L132.9,210.72L133.4,210.64L133.9,210.56L134.4,210.48L134.9,210.38L135.4,210.28L135.9,210.17L136.4,210.06L136.9,209.94L137.4,209.81L137.9,209.67L138.4,209.53L138.9,209.38L139.4,209.22L139.9,209.06L140.4,208.89L140.9,208.71L141.4,208.52L141.9,208.33L142.4,208.14L142.9,207.94L143.4,207.74L143.9,207.53L144.4,207.32L144.9,207.10L145.4,206.89L145.9,206.68L146.4,206.46L146.9,206.25L147.4,206.04L147.9,205.83L148.4,205.63L148.9,205.44L149.4,205.25L149.9,205.06L150.4,204.89L150.9,204.73L151.4,204.58L151.9,204.43L152.4,204.31L152.9,204.19L153.4,204.09L153.9,204.00L154.4,203.93L154.9,203.87L155.4,203.83L155.9,203.81L156.4,203.80L156.9,203.81L157.4,203.83L157.9,203.87L158.4,203.93L158.9,204.00L159.4,204.09L159.9,204.19L160.4,204.31L160.9,204.43L161.4,204.58L161.9,204.73L162.4,204.89L162.9,205.06L163.4,205.25L163.9,205.44L164.4,205.63L164.9,205.83L165.4,206.04L165.9,206.25L166.4,206.46L166.9,206.68L167.4,206.89L167.9,207.10L168.4,207.32L168.9,207.53L169.4,207.74L169.9,207.94L170.4,208.14L170.9,208.33L171.4,208.52L171.9,208.71L172.4,208.89L172.9,209.06L173.4,209.22L173.9,209.38L174.4,209.53L174.9,209.67L175.4,209.81L175.9,209.94L176.4,210.06L176.9,210.17L177.4,210.28L177.9,210.38L178.4,210.48L178.9,210.56L179.4,210.64L179.9,210.72L180.4,210.79L180.9,210.85L181.4,210.91L181.9,210.96L182.4,211.01L182.9,211.06L183.4,211.10L183.9,211.14L184.4,211.17L184.9,211.20L184.9,211.20Z" fill="#ff6464"/><path d="M127.9,211.20L127.9,211.20L128.4,211.18L128.9,211.17L129.4,211.15L129.9,211.13L130.4,211.11L130.9,211.08L131.4,211.06L131.9,211.03L132.4,210.99L132.9,210.96L133.4,210.92L133.9,210.88L134.4,210.84L134.9,210.79L135.4,210.74L135.9,210.69L136.4,210.63L136.9,210.57L137.4,210.51L137.9,210.44L138.4,210.37L138.9,210.29L139.4,210.21L139.9,210.13L140.4,210.04L140.9,209.95L141.4,209.86L141.9,209.77L142.4,209.67L142.9,209.57L143.4,209.47L143.9,209.36L144.4,209.26L144.9,209.15L145.4,209.04L145.9,208.94L146.4,208.83L146.9,208.72L147.4,208.62L147.9,208.52L148.4,208.42L148.9,208.32L149.4,208.22L149.9,208.13L150.4,208.05L150.9,207.96L151.4,207.89L151.9,207.82L152.4,207.75L152.9,207.70L153.4,207.64L153.9,207.60L154.4,207.56L154.9,207.54L155.4,207.52L155.9,207.50L156.4,207.50L156.9,207.50L157.4,207.52L157.9,207.54L158.4,207.56L158.9,207.60L159.4,207.64L159.9,207.70L160.4,207.75L160.9,207.82L161.4,207.89L161.9,207.96L162.4,208.05L162.9,208.13L163.4,208.22L163.9,208.32L164.4,208.42L164.9,208.52L165.4,208.62L165.9,208.72L166.4,208.83L166.9,208.94L167.4,209.04L167.9,209.15L168.4,209.26L168.9,209.36L169.4,209.47L169.9,209.57L170.4,209.67L170.9,209.77L171.4,209.86L171.9,209.95L172.4,210.04L172.9,210.13L173.4,210.21L173.9,210.29L174.4,210.37L174.9,210.44L175.4,210.51L175.9,210.57L176.4,210.63L176.9,210.69L177.4,210.74L177.9,210.79L178.4,210.84L178.9,210.88L179.4,210.92L179.9,210.96L180.4,210.99L180.9,211.03L181.4,211.06L181.9,211.08L182.4,211.11L182.9,211.13L183.4,211.15L183.9,211.17L184.4,211.18L184.9,211.20L184.9,211.20Z" fill="#fad28c"/><path d="M188.0,211.20L188.0,211.20L188.5,211.17L189.0,211.14L189.5,211.10L190.0,211.07L190.5,211.02L191.0,210.98L191.5,210.93L192.0,210.87L192.5,210.81L193.0,210.75L193.5,210.67L194.0,210.60L194.5,210.52L195.0,210.43L195.5,210.33L196.0,210.23L196.5,210.12L197.0,210.01L197.5,209.89L198.0,209.76L198.5,209.62L199.0,209.48L199.5,209.33L200.0,209.17L200.5,209.01L201.0,208.84L201.5,208.67L202.0,208.49L202.5,208.30L203.0,208.12L203.5,207.92L204.0,207.73L204.5,207.53L205.0,207.33L205.5,207.12L206.0,206.92L206.5,206.72L207.0,206.52L207.5,206.32L208.0,206.12L208.5,205.93L209.0,205.75L209.5,205.57L210.0,205.40L210.5,205.23L211.0,205.08L211.5,204.93L212.0,204.80L212.5,204.68L213.0,204.57L213.5,204.47L214.0,204.39L214.5,204.32L215.0,204.27L215.5,204.23L216.0,204.21L216.5,204.20L217.0,204.21L217.5,204.23L218.0,204.27L218.5,204.32L219.0,204.39L219.5,204.47L220.0,204.57L220.5,204.68L221.0,204.80L221.5,204.93L222.0,205.08L222.5,205.23L223.0,205.40L223.5,205.57L224.0,205.75L224.5,205.93L225.0,206.12L225.5,206.32L226.0,206.52L226.5,206.72L227.0,206.92L227.5,207.12L228.0,207.33L228.5,207.53L229.0,207.73L229.5,207.92L230.0,208.12L230.5,208.30L231.0,208.49L231.5,208.67L232.0,208.84L232.5,209.01L233.0,209.17L233.5,209.33L234.0,209.48L234.5,209.62L235.0,209.76L235.5,209.89L236.0,210.01L236.5,210.12L237.0,210.23L237.5,210.33L238.0,210.43L238.5,210.52L239.0,210.60L239.5,210.67L240.0,210.75L240.5,210.81L241.0,210.87L241.5,210.93L242.0,210.98L242.5,211.02L243.0,211.07L243.5,211.10L244.0,211.14L244.5,211.17L245.0,211.20L245.0,211.20Z" fill="#ff6464"/><path d="M188.0,211.20L188.0,211.20L188.5,211.19L189.0,211.17L189.5,211.16L190.0,211.14L190.5,211.12L191.0,211.10L191.5,211.07L192.0,211.04L192.5,211.02L193.0,210.99L193.5,210.95L194.0,210.92L194.5,210.88L195.0,210.84L195.5,210.79L196.0,210.74L196.5,210.69L197.0,210.64L197.5,210.58L198.0,210.52L198.5,210.46L199.0,210.39L199.5,210.32L200.0,210.24L200.5,210.17L201.0,210.09L201.5,210.01L202.0,209.92L202.5,209.84L203.0,209.75L203.5,209.65L204.0,209.56L204.5,209.47L205.0,209.37L205.5,209.28L206.0,209.18L206.5,209.09L207.0,208.99L207.5,208.90L208.0,208.81L208.5,208.72L209.0,208.63L209.5,208.55L210.0,208.46L210.5,208.39L211.0,208.31L211.5,208.25L212.0,208.18L212.5,208.13L213.0,208.07L213.5,208.03L214.0,207.99L214.5,207.96L215.0,207.93L215.5,207.91L216.0,207.90L216.5,207.90L217.0,207.90L217.5,207.91L218.0,207.93L218.5,207.96L219.0,207.99L219.5,208.03L220.0,208.07L220.5,208.13L221.0,208.18L221.5,208.25L222.0,208.31L222.5,208.39L223.0,208.46L223.5,208.55L224.0,208.63L224.5,208.72L225.0,208.81L225.5,208.90L226.0,208.99L226.5,209.09L227.0,209.18L227.5,209.28L228.0,209.37L228.5,209.47L229.0,209.56L229.5,209.65L230.0,209.75L230.5,209.84L231.0,209.92L231.5,210.01L232.0,210.09L232.5,210.17L233.0,210.24L233.5,210.32L234.0,210.39L234.5,210.46L235.0,210.52L235.5,210.58L236.0,210.64L236.5,210.69L237.0,210.74L237.5,210.79L238.0,210.84L238.5,210.88L239.0,210.92L239.5,210.95L240.0,210.99L240.5,211.02L241.0,211.04L241.5,211.07L242.0,211.10L242.5,211.12L243.0,211.14L243.5,211.16L244.0,211.17L244.5,211.19L245.0,211.20L245.0,211.20Z" fill="#fad28c"/><path d="M127.9,226.25L127.9,226.25L128.4,226.22L128.9,226.19L129.4,226.16L129.9,226.12L130.4,226.08L130.9,226.04L131.4,225.99L131.9,225.94L132.4,225.88L132.9,225.81L133.4,225.75L133.9,225.67L134.4,225.59L134.9,225.51L135.4,225.42L135.9,225.32L136.4,225.22L136.9,225.11L137.4,224.99L137.9,224.87L138.4,224.74L138.9,224.60L139.4,224.46L139.9,224.31L140.4,224.16L140.9,223.99L141.4,223.83L141.9,223.66L142.4,223.48L142.9,223.30L143.4,223.11L143.9,222.92L144.4,222.73L144.9,222.54L145.4,222.35L145.9,222.15L146.4,221.96L146.9,221.77L147.4,221.58L147.9,221.39L148.4,221.21L148.9,221.03L149.4,220.86L149.9,220.70L150.4,220.54L150.9,220.39L151.4,220.25L151.9,220.12L152.4,220.01L152.9,219.90L153.4,219.81L153.9,219.73L154.4,219.67L154.9,219.62L155.4,219.58L155.9,219.56L156.4,219.55L156.9,219.56L157.4,219.58L157.9,219.62L158.4,219.67L158.9,219.73L159.4,219.81L159.9,219.90L160.4,220.01L160.9,220.12L161.4,220.25L161.9,220.39L162.4,220.54L162.9,220.70L163.4,220.86L163.9,221.03L164.4,221.21L164.9,221.39L165.4,221.58L165.9,221.77L166.4,221.96L166.9,222.15L167.4,222.35L167.9,222.54L168.4,222.73L168.9,222.92L169.4,223.11L169.9,223.30L170.4,223.48L170.9,223.66L171.4,223.83L171.9,223.99L172.4,224.16L172.9,224.31L173.4,224.46L173.9,224.60L174.4,224.74L174.9,224.87L175.4,224.99L175.9,225.11L176.4,225.22L176.9,225.32L177.4,225.42L177.9,225.51L178.4,225.59L178.9,225.67L179.4,225.75L179.9,225.81L180.4,225.88L180.9,225.94L181.4,225.99L181.9,226.04L182.4,226.08L182.9,226.12L183.4,226.16L183.9,226.19L184.4,226.22L184.9,226.25L184.9,226.25Z" fill="#ff6464"/><path d="M188.0,226.25L188.0,226.25L188.5,226.22L189.0,226.20L189.5,226.16L190.0,226.13L190.5,226.09L191.0,226.05L191.5,226.00L192.0,225.95L192.5,225.90L193.0,225.84L193.5,225.78L194.0,225.71L194.5,225.63L195.0,225.55L195.5,225.47L196.0,225.38L196.5,225.28L197.0,225.18L197.5,225.07L198.0,224.95L198.5,224.83L199.0,224.70L199.5,224.57L200.0,224.43L200.5,224.28L201.0,224.13L201.5,223.97L202.0,223.81L202.5,223.64L203.0,223.47L203.5,223.30L204.0,223.12L204.5,222.94L205.0,222.76L205.5,222.58L206.0,222.40L206.5,222.22L207.0,222.04L207.5,221.86L208.0,221.68L208.5,221.51L209.0,221.34L209.5,221.18L210.0,221.03L210.5,220.88L211.0,220.74L211.5,220.61L212.0,220.49L212.5,220.38L213.0,220.28L213.5,220.20L214.0,220.12L214.5,220.06L215.0,220.01L215.5,219.98L216.0,219.96L216.5,219.95L217.0,219.96L217.5,219.98L218.0,220.01L218.5,220.06L219.0,220.12L219.5,220.20L220.0,220.28L220.5,220.38L221.0,220.49L221.5,220.61L222.0,220.74L222.5,220.88L223.0,221.03L223.5,221.18L224.0,221.34L224.5,221.51L225.0,221.68L225.5,221.86L226.0,222.04L226.5,222.22L227.0,222.40L227.5,222.58L228.0,222.76L228.5,222.94L229.0,223.12L229.5,223.30L230.0,223.47L230.5,223.64L231.0,223.81L231.5,223.97L232.0,224.13L232.5,224.28L233.0,224.43L233.5,224.57L234.0,224.70L234.5,224.83L235.0,224.95L235.5,225.07L236.0,225.18L236.5,225.28L237.0,225.38L237.5,225.47L238.0,225.55L238.5,225.63L239.0,225.71L239.5,225.78L240.0,225.84L240.5,225.90L241.0,225.95L241.5,226.00L242.0,226.05L242.5,226.09L243.0,226.13L243.5,226.16L244.0,226.20L244.5,226.22L245.0,226.25L245.0,226.25Z" fill="#ff6464"/><path d="M188.0,241.30L188.0,241.30L188.5,241.29L189.0,241.28L189.5,241.27L190.0,241.26L190.5,241.24L191.0,241.23L191.5,241.21L192.0,241.20L192.5,241.18L193.0,241.16L193.5,241.13L194.0,241.11L194.5,241.08L195.0,241.06L195.5,241.03L196.0,241.00L196.5,240.96L197.0,240.93L197.5,240.89L198.0,240.85L198.5,240.80L199.0,240.76L199.5,240.71L200.0,240.66L200.5,240.61L201.0,240.56L201.5,240.50L202.0,240.45L202.5,240.39L203.0,240.33L203.5,240.27L204.0,240.21L204.5,240.15L205.0,240.08L205.5,240.02L206.0,239.95L206.5,239.89L207.0,239.83L207.5,239.77L208.0,239.70L208.5,239.64L209.0,239.59L209.5,239.53L210.0,239.48L210.5,239.42L211.0,239.38L211.5,239.33L212.0,239.29L212.5,239.25L213.0,239.22L213.5,239.19L214.0,239.16L214.5,239.14L215.0,239.12L215.5,239.11L216.0,239.10L216.5,239.10L217.0,239.10L217.5,239.11L218.0,239.12L218.5,239.14L219.0,239.16L219.5,239.19L220.0,239.22L220.5,239.25L221.0,239.29L221.5,239.33L222.0,239.38L222.5,239.42L223.0,239.48L223.5,239.53L224.0,239.59L224.5,239.64L225.0,239.70L225.5,239.77L226.0,239.83L226.5,239.89L227.0,239.95L227.5,240.02L228.0,240.08L228.5,240.15L229.0,240.21L229.5,240.27L230.0,240.33L230.5,240.39L231.0,240.45L231.5,240.50L232.0,240.56L232.5,240.61L233.0,240.66L233.5,240.71L234.0,240.76L234.5,240.80L235.0,240.85L235.5,240.89L236.0,240.93L236.5,240.96L237.0,241.00L237.5,241.03L238.0,241.06L238.5,241.08L239.0,241.11L239.5,241.13L240.0,241.16L240.5,241.18L241.0,241.20L241.5,241.21L242.0,241.23L242.5,241.24L243.0,241.26L243.5,241.27L244.0,241.28L244.5,241.29L245.0,241.30L245.0,241.30Z" fill="#fad28c"/><path d="M127.9,256.35L127.9,256.35L128.4,256.33L128.9,256.32L129.4,256.30L129.9,256.28L130.4,256.25L130.9,256.23L131.4,256.20L131.9,256.17L132.4,256.13L132.9,256.10L133.4,256.06L133.9,256.01L134.4,255.97L134.9,255.92L135.4,255.87L135.9,255.81L136.4,255.75L136.9,255.69L137.4,255.62L137.9,255.55L138.4,255.47L138.9,255.39L139.4,255.31L139.9,255.22L140.4,255.13L140.9,255.04L141.4,254.94L141.9,254.84L142.4,254.74L142.9,254.63L143.4,254.52L143.9,254.41L144.4,254.30L144.9,254.19L145.4,254.08L145.9,253.97L146.4,253.85L146.9,253.74L147.4,253.63L147.9,253.52L148.4,253.42L148.9,253.31L149.4,253.21L149.9,253.12L150.4,253.03L150.9,252.94L151.4,252.86L151.9,252.78L152.4,252.72L152.9,252.66L153.4,252.60L153.9,252.56L154.4,252.52L154.9,252.49L155.4,252.47L155.9,252.45L156.4,252.45L156.9,252.45L157.4,252.47L157.9,252.49L158.4,252.52L158.9,252.56L159.4,252.60L159.9,252.66L160.4,252.72L160.9,252.78L161.4,252.86L161.9,252.94L162.4,253.03L162.9,253.12L163.4,253.21L163.9,253.31L164.4,253.42L164.9,253.52L165.4,253.63L165.9,253.74L166.4,253.85L166.9,253.97L167.4,254.08L167.9,254.19L168.4,254.30L168.9,254.41L169.4,254.52L169.9,254.63L170.4,254.74L170.9,254.84L171.4,254.94L171.9,255.04L172.4,255.13L172.9,255.22L173.4,255.31L173.9,255.39L174.4,255.47L174.9,255.55L175.4,255.62L175.9,255.69L176.4,255.75L176.9,255.81L177.4,255.87L177.9,255.92L178.4,255.97L178.9,256.01L179.4,256.06L179.9,256.10L180.4,256.13L180.9,256.17L181.4,256.20L181.9,256.23L182.4,256.25L182.9,256.28L183.4,256.30L183.9,256.32L184.4,256.33L184.9,256.35L184.9,256.35Z" fill="#ff6464"/><path d="M127.9,256.35L127.9,256.35L128.4,256.34L128.9,256.33L129.4,256.32L129.9,256.31L130.4,256.30L130.9,256.29L131.4,256.28L131.9,256.26L132.4,256.24L132.9,256.23L133.4,256.21L133.9,256.19L134.4,256.16L134.9,256.14L135.4,256.11L135.9,256.09L136.4,256.06L136.9,256.03L137.4,255.99L137.9,255.96L138.4,255.92L138.9,255.88L139.4,255.84L139.9,255.80L140.4,255.76L140.9,255.71L141.4,255.66L141.9,255.61L142.4,255.56L142.9,255.51L143.4,255.46L143.9,255.41L144.4,255.35L144.9,255.30L145.4,255.24L145.9,255.19L146.4,255.13L146.9,255.08L147.4,255.03L147.9,254.97L148.4,254.92L148.9,254.87L149.4,254.82L149.9,254.77L150.4,254.73L150.9,254.69L151.4,254.65L151.9,254.61L152.4,254.58L152.9,254.55L153.4,254.52L153.9,254.50L154.4,254.48L154.9,254.47L155.4,254.46L155.9,254.45L156.4,254.45L156.9,254.45L157.4,254.46L157.9,254.47L158.4,254.48L158.9,254.50L159.4,254.52L159.9,254.55L160.4,254.58L160.9,254.61L161.4,254.65L161.9,254.69L162.4,254.73L162.9,254.77L163.4,254.82L163.9,254.87L164.4,254.92L164.9,254.97L165.4,255.03L165.9,255.08L166.4,255.13L166.9,255.19L167.4,255.24L167.9,255.30L168.4,255.35L168.9,255.41L169.4,255.46L169.9,255.51L170.4,255.56L170.9,255.61L171.4,255.66L171.9,255.71L172.4,255.76L172.9,255.80L173.4,255.84L173.9,255.88L174.4,255.92L174.9,255.96L175.4,255.99L175.9,256.03L176.4,256.06L176.9,256.09L177.4,256.11L177.9,256.14L178.4,256.16L178.9,256.19L179.4,256.21L179.9,256.23L180.4,256.24L180.9,256.26L181.4,256.28L181.9,256.29L182.4,256.30L182.9,256.31L183.4,256.32L183.9,256.33L184.4,256.34L184.9,256.35L184.9,256.35Z" fill="#fad28c"/><path d="M188.0,256.35L188.0,256.35L188.5,256.34L189.0,256.32L189.5,256.31L190.0,256.29L190.5,256.27L191.0,256.25L191.5,256.22L192.0,256.19L192.5,256.17L193.0,256.14L193.5,256.10L194.0,256.07L194.5,256.03L195.0,255.99L195.5,255.94L196.0,255.89L196.5,255.84L197.0,255.79L197.5,255.73L198.0,255.67L198.5,255.61L199.0,255.54L199.5,255.47L200.0,255.39L200.5,255.32L201.0,255.24L201.5,255.16L202.0,255.07L202.5,254.99L203.0,254.90L203.5,254.80L204.0,254.71L204.5,254.62L205.0,254.52L205.5,254.43L206.0,254.33L206.5,254.24L207.0,254.14L207.5,254.05L208.0,253.96L208.5,253.87L209.0,253.78L209.5,253.70L210.0,253.61L210.5,253.54L211.0,253.46L211.5,253.40L212.0,253.33L212.5,253.28L213.0,253.22L213.5,253.18L214.0,253.14L214.5,253.11L215.0,253.08L215.5,253.06L216.0,253.05L216.5,253.05L217.0,253.05L217.5,253.06L218.0,253.08L218.5,253.11L219.0,253.14L219.5,253.18L220.0,253.22L220.5,253.28L221.0,253.33L221.5,253.40L222.0,253.46L222.5,253.54L223.0,253.61L223.5,253.70L224.0,253.78L224.5,253.87L225.0,253.96L225.5,254.05L226.0,254.14L226.5,254.24L227.0,254.33L227.5,254.43L228.0,254.52L228.5,254.62L229.0,254.71L229.5,254.80L230.0,254.90L230.5,254.99L231.0,255.07L231.5,255.16L232.0,255.24L232.5,255.32L233.0,255.39L233.5,255.47L234.0,255.54L234.5,255.61L235.0,255.67L235.5,255.73L236.0,255.79L236.5,255.84L237.0,255.89L237.5,255.94L238.0,255.99L238.5,256.03L239.0,256.07L239.5,256.10L240.0,256.14L240.5,256.17L241.0,256.19L241.5,256.22L242.0,256.25L242.5,256.27L243.0,256.29L243.5,256.31L244.0,256.32L244.5,256.34L245.0,256.35L245.0,256.35Z" fill="#fad28c"/><path d="M127.9,271.40L127.9,271.40L128.4,271.37L128.9,271.34L129.4,271.31L129.9,271.28L130.4,271.24L130.9,271.19L131.4,271.15L131.9,271.09L132.4,271.04L132.9,270.98L133.4,270.91L133.9,270.84L134.4,270.76L134.9,270.68L135.4,270.59L135.9,270.50L136.4,270.40L136.9,270.29L137.4,270.18L137.9,270.06L138.4,269.93L138.9,269.80L139.4,269.66L139.9,269.52L140.4,269.37L140.9,269.21L141.4,269.05L141.9,268.88L142.4,268.71L142.9,268.54L143.4,268.36L143.9,268.17L144.4,267.99L144.9,267.80L145.4,267.61L145.9,267.43L146.4,267.24L146.9,267.05L147.4,266.87L147.9,266.69L148.4,266.51L148.9,266.34L149.4,266.17L149.9,266.01L150.4,265.86L150.9,265.72L151.4,265.58L151.9,265.46L152.4,265.34L152.9,265.24L153.4,265.15L153.9,265.08L154.4,265.01L154.9,264.96L155.4,264.93L155.9,264.91L156.4,264.90L156.9,264.91L157.4,264.93L157.9,264.96L158.4,265.01L158.9,265.08L159.4,265.15L159.9,265.24L160.4,265.34L160.9,265.46L161.4,265.58L161.9,265.72L162.4,265.86L162.9,266.01L163.4,266.17L163.9,266.34L164.4,266.51L164.9,266.69L165.4,266.87L165.9,267.05L166.4,267.24L166.9,267.43L167.4,267.61L167.9,267.80L168.4,267.99L168.9,268.17L169.4,268.36L169.9,268.54L170.4,268.71L170.9,268.88L171.4,269.05L171.9,269.21L172.4,269.37L172.9,269.52L173.4,269.66L173.9,269.80L174.4,269.93L174.9,270.06L175.4,270.18L175.9,270.29L176.4,270.40L176.9,270.50L177.4,270.59L177.9,270.68L178.4,270.76L178.9,270.84L179.4,270.91L179.9,270.98L180.4,271.04L180.9,271.09L181.4,271.15L181.9,271.19L182.4,271.24L182.9,271.28L183.4,271.31L183.9,271.34L184.4,271.37L184.9,271.40L184.9,271.40Z" fill="#ff6464"/><path d="M127.9,271.40L127.9,271.40L128.4,271.38L128.9,271.37L129.4,271.35L129.9,271.33L130.4,271.31L130.9,271.28L131.4,271.26L131.9,271.23L132.4,271.19L132.9,271.16L133.4,271.12L133.9,271.08L134.4,271.04L134.9,270.99L135.4,270.94L135.9,270.89L136.4,270.83L136.9,270.77L137.4,270.71L137.9,270.64L138.4,270.57L138.9,270.49L139.4,270.41L139.9,270.33L140.4,270.24L140.9,270.15L141.4,270.06L141.9,269.97L142.4,269.87L142.9,269.77L143.4,269.67L143.9,269.56L144.4,269.46L144.9,269.35L145.4,269.24L145.9,269.14L146.4,269.03L146.9,268.92L147.4,268.82L147.9,268.72L148.4,268.62L148.9,268.52L149.4,268.42L149.9,268.33L150.4,268.25L150.9,268.16L151.4,268.09L151.9,268.02L152.4,267.95L152.9,267.90L153.4,267.84L153.9,267.80L154.4,267.76L154.9,267.74L155.4,267.72L155.9,267.70L156.4,267.70L156.9,267.70L157.4,267.72L157.9,267.74L158.4,267.76L158.9,267.80L159.4,267.84L159.9,267.90L160.4,267.95L160.9,268.02L161.4,268.09L161.9,268.16L162.4,268.25L162.9,268.33L163.4,268.42L163.9,268.52L164.4,268.62L164.9,268.72L165.4,268.82L165.9,268.92L166.4,269.03L166.9,269.14L167.4,269.24L167.9,269.35L168.4,269.46L168.9,269.56L169.4,269.67L169.9,269.77L170.4,269.87L170.9,269.97L171.4,270.06L171.9,270.15L172.4,270.24L172.9,270.33L173.4,270.41L173.9,270.49L174.4,270.57L174.9,270.64L175.4,270.71L175.9,270.77L176.4,270.83L176.9,270.89L177.4,270.94L177.9,270.99L178.4,271.04L178.9,271.08L179.4,271.12L179.9,271.16L180.4,271.19L180.9,271.23L181.4,271.26L181.9,271.28L182.4,271.31L182.9,271.33L183.4,271.35L183.9,271.37L184.4,271.38L184.9,271.40L184.9,271.40Z" fill="#fad28c"/><path d="M188.0,271.40L188.0,271.40L188.5,271.37L189.0,271.33L189.5,271.29L190.0,271.25L190.5,271.20L191.0,271.15L191.5,271.09L192.0,271.02L192.5,270.96L193.0,270.88L193.5,270.80L194.0,270.71L194.5,270.62L195.0,270.52L195.5,270.41L196.0,270.29L196.5,270.17L197.0,270.04L197.5,269.90L198.0,269.75L198.5,269.60L199.0,269.43L199.5,269.26L200.0,269.08L200.5,268.90L201.0,268.71L201.5,268.51L202.0,268.30L202.5,268.09L203.0,267.87L203.5,267.65L204.0,267.43L204.5,267.20L205.0,266.97L205.5,266.74L206.0,266.51L206.5,266.28L207.0,266.05L207.5,265.82L208.0,265.60L208.5,265.38L209.0,265.17L209.5,264.96L210.0,264.77L210.5,264.58L211.0,264.40L211.5,264.24L212.0,264.09L212.5,263.95L213.0,263.82L213.5,263.71L214.0,263.62L214.5,263.54L215.0,263.48L215.5,263.44L216.0,263.41L216.5,263.40L217.0,263.41L217.5,263.44L218.0,263.48L218.5,263.54L219.0,263.62L219.5,263.71L220.0,263.82L220.5,263.95L221.0,264.09L221.5,264.24L222.0,264.40L222.5,264.58L223.0,264.77L223.5,264.96L224.0,265.17L224.5,265.38L225.0,265.60L225.5,265.82L226.0,266.05L226.5,266.28L227.0,266.51L227.5,266.74L228.0,266.97L228.5,267.20L229.0,267.43L229.5,267.65L230.0,267.87L230.5,268.09L231.0,268.30L231.5,268.51L232.0,268.71L232.5,268.90L233.0,269.08L233.5,269.26L234.0,269.43L234.5,269.60L235.0,269.75L235.5,269.90L236.0,270.04L236.5,270.17L237.0,270.29L237.5,270.41L238.0,270.52L238.5,270.62L239.0,270.71L239.5,270.80L240.0,270.88L240.5,270.96L241.0,271.02L241.5,271.09L242.0,271.15L242.5,271.20L243.0,271.25L243.5,271.29L244.0,271.33L244.5,271.37L245.0,271.40L245.0,271.40Z" fill="#ff6464"/><path d="M188.0,271.40L188.0,271.40L188.5,271.39L189.0,271.38L189.5,271.37L190.0,271.36L190.5,271.35L191.0,271.34L191.5,271.33L192.0,271.31L192.5,271.29L193.0,271.28L193.5,271.26L194.0,271.24L194.5,271.21L195.0,271.19L195.5,271.16L196.0,271.14L196.5,271.11L197.0,271.08L197.5,271.04L198.0,271.01L198.5,270.97L199.0,270.93L199.5,270.89L200.0,270.85L200.5,270.81L201.0,270.76L201.5,270.71L202.0,270.66L202.5,270.61L203.0,270.56L203.5,270.51L204.0,270.46L204.5,270.40L205.0,270.35L205.5,270.29L206.0,270.24L206.5,270.18L207.0,270.13L207.5,270.08L208.0,270.02L208.5,269.97L209.0,269.92L209.5,269.87L210.0,269.82L210.5,269.78L211.0,269.74L211.5,269.70L212.0,269.66L212.5,269.63L213.0,269.60L213.5,269.57L214.0,269.55L214.5,269.53L215.0,269.52L215.5,269.51L216.0,269.50L216.5,269.50L217.0,269.50L217.5,269.51L218.0,269.52L218.5,269.53L219.0,269.55L219.5,269.57L220.0,269.60L220.5,269.63L221.0,269.66L221.5,269.70L222.0,269.74L222.5,269.78L223.0,269.82L223.5,269.87L224.0,269.92L224.5,269.97L225.0,270.02L225.5,270.08L226.0,270.13L226.5,270.18L227.0,270.24L227.5,270.29L228.0,270.35L228.5,270.40L229.0,270.46L229.5,270.51L230.0,270.56L230.5,270.61L231.0,270.66L231.5,270.71L232.0,270.76L232.5,270.81L233.0,270.85L233.5,270.89L234.0,270.93L234.5,270.97L235.0,271.01L235.5,271.04L236.0,271.08L236.5,271.11L237.0,271.14L237.5,271.16L238.0,271.19L238.5,271.21L239.0,271.24L239.5,271.26L240.0,271.28L240.5,271.29L241.0,271.31L241.5,271.33L242.0,271.34L242.5,271.35L243.0,271.36L243.5,271.37L244.0,271.38L244.5,271.39L245.0,271.40L245.0,271.40Z" fill="#fad28c"/></svg>
<span class="t" style="font-size:7.4px;color:#111;transform:translate(25.60px,92.69px) rotate(0.05deg) scaleX(0.9311);">Totals</span>
<span class="t" style="font-size:7.4px;color:#111;transform:translate(23.10px,107.69px) rotate(0.05deg) scaleX(0.9020);">Naming</span>
<span class="t" style="font-size:7.4px;color:#111;transform:translate(23.35px,122.69px) rotate(0.05deg) scaleX(0.9115);">Version</span>
<span class="t" style="font-size:7.4px;color:#111;transform:translate(14.35px,137.69px) rotate(0.05deg) scaleX(0.9201);">Configuration</span>
<span class="t" style="font-size:7.4px;color:#111;transform:translate(19.85px,152.69px) rotate(0.05deg) scaleX(0.8746);">Properties</span>
<span class="t" style="font-size:7.4px;color:#111;transform:translate(19.10px,167.94px) rotate(0.05deg) scaleX(0.8762);">Databases</span>
<span class="t" style="font-size:7.4px;color:#111;transform:translate(12.60px,182.94px) rotate(0.05deg) scaleX(0.9383);">Database files</span>
<span class="t" style="font-size:7.4px;color:#111;transform:translate(26.10px,197.94px) rotate(0.05deg) scaleX(0.8797);">Users</span>
<span class="t" style="font-size:7.4px;color:#111;transform:translate(6.10px,212.94px) rotate(0.05deg) scaleX(0.9178);">Registered servers</span>
<span class="t" style="font-size:7.4px;color:#111;transform:translate(17.85px,227.94px) rotate(0.05deg) scaleX(0.8854);">Assemblies</span>
<span class="t" style="font-size:7.4px;color:#111;transform:translate(21.85px,243.19px) rotate(0.05deg) scaleX(0.8986);">Services</span>
<span class="t" style="font-size:7.4px;color:#111;transform:translate(22.60px,258.19px) rotate(0.05deg) scaleX(0.8843);">Registry</span>
<span class="t" style="font-size:7.4px;color:#1a1a1a;transform:translate(72.80px,189.50px) rotate(-90deg) scaleX(0.8196) translate(0,-8.00px);">Local</span>
<span class="t" style="font-size:7.4px;color:#1a1a1a;transform:translate(133.00px,191.20px) rotate(-90deg) scaleX(0.8826) translate(0,-8.00px);">SQL2014</span>
<span class="t" style="font-size:7.4px;color:#1a1a1a;transform:translate(193.10px,191.20px) rotate(-90deg) scaleX(0.8826) translate(0,-8.00px);">SQL2016</span>
<div class="abs" style="left:125px;top:191.6px;width:10.6px;height:12px;background:#d0d0d0;filter:blur(2.1px);"></div>
<div class="abs" style="left:185.1px;top:191.6px;width:10.6px;height:12px;background:#d0d0d0;filter:blur(2.1px);"></div>
<svg width="700" height="404"><rect x="2.1" y="275.6" width="698" height="130" fill="#fff"/><rect x="2.1" y="276.2" width="698" height="14.4" fill="#f0f0f0"/><rect x="2.1" y="275.6" width="698" height="1" fill="#9ea2a8"/><rect x="2.1" y="275.6" width="0.9" height="130" fill="#8e9298"/><rect x="462.3" y="300.91" width="120.09999999999997" height="40.84" fill="#fad28c"/><rect x="582.4" y="290.70" width="117.60000000000002" height="20.42" fill="#fad28c"/><rect x="582.4" y="321.33" width="117.60000000000002" height="10.21" fill="#fad28c"/><rect x="582.4" y="341.75" width="117.60000000000002" height="63.30" fill="#ff6464"/></svg>
<span class="t" style="font-size:7.4px;color:#111;transform:translate(7.00px,276.94px) rotate(0.05deg) scaleX(0.8221);">Comparison</span>
<span class="t" style="font-size:7.4px;color:#111;transform:translate(91.00px,276.94px) rotate(0.05deg) scaleX(0.8697);">Object</span>
<span class="t" style="font-size:7.4px;color:#111;transform:translate(175.90px,276.94px) rotate(0.05deg) scaleX(0.8482);">Sub-Object</span>
<span class="t" style="font-size:7.4px;color:#111;transform:translate(260.60px,276.94px) rotate(0.05deg) scaleX(0.8331);">Property</span>
<span class="t" style="font-size:7.4px;color:#111;transform:translate(344.90px,276.94px) rotate(0.05deg) scaleX(0.8648);">Local</span>
<span class="t" style="font-size:7.4px;color:#111;transform:translate(475.40px,276.94px) rotate(0.05deg) scaleX(0.8507);">SQL2014</span>
<span class="t" style="font-size:7.4px;color:#111;transform:translate(595.70px,276.94px) rotate(0.05deg) scaleX(0.8698);">SQL2016</span>
<div class="abs" style="left:464.6px;top:278px;width:10px;height:9.5px;background:#d2d2d2;filter:blur(1.5px);"></div>
<div class="abs" style="left:584.6px;top:278px;width:10px;height:9.5px;background:#d2d2d2;filter:blur(1.5px);"></div>
<span class="t" style="font-size:7.4px;color:#111;transform:translate(7.40px,290.69px) rotate(0.05deg) scaleX(0.8542);">Configuration</span>
<span class="t" style="font-size:7.4px;color:#111;transform:translate(90.30px,290.69px) rotate(0.05deg) scaleX(0.8344);">max degree of parallelism</span>
<span class="t" style="font-size:7.4px;color:#111;transform:translate(259.30px,290.69px) rotate(0.05deg) scaleX(0.8818);">value</span>
<span class="t" style="font-size:7.4px;color:#111;transform:translate(344.30px,290.69px) rotate(0.05deg) scaleX(0.7775);">4</span>
<span class="t" style="font-size:7.4px;color:#111;transform:translate(464.30px,290.69px) rotate(0.05deg) scaleX(0.7775);">4</span>
<span class="t" style="font-size:7.4px;color:#111;transform:translate(585.30px,290.69px) rotate(0.05deg) scaleX(0.7775);">1</span>
<span class="t" style="font-size:7.4px;color:#111;transform:translate(7.40px,300.94px) rotate(0.05deg) scaleX(0.8542);">Configuration</span>
<span class="t" style="font-size:7.4px;color:#111;transform:translate(90.30px,300.94px) rotate(0.05deg) scaleX(0.8387);">max server memory (MB)</span>
<span class="t" style="font-size:7.4px;color:#111;transform:translate(259.30px,300.94px) rotate(0.05deg) scaleX(0.8818);">value</span>
<span class="t" style="font-size:7.4px;color:#111;transform:translate(344.30px,300.94px) rotate(0.05deg) scaleX(0.8140);">3000</span>
<span class="t" style="font-size:7.4px;color:#111;transform:translate(464.30px,300.94px) rotate(0.05deg) scaleX(0.8261);">23214</span>
<span class="t" style="font-size:7.4px;color:#111;transform:translate(585.30px,300.94px) rotate(0.05deg) scaleX(0.8140);">9831</span>
<span class="t" style="font-size:7.4px;color:#111;transform:translate(7.40px,311.19px) rotate(0.05deg) scaleX(0.8542);">Configuration</span>
<span class="t" style="font-size:7.4px;color:#111;transform:translate(90.30px,311.19px) rotate(0.05deg) scaleX(0.8563);">clr enabled</span>
<span class="t" style="font-size:7.4px;color:#111;transform:translate(259.30px,311.19px) rotate(0.05deg) scaleX(0.8818);">value</span>
<span class="t" style="font-size:7.4px;color:#111;transform:translate(344.30px,311.19px) rotate(0.05deg) scaleX(0.7775);">0</span>
<span class="t" style="font-size:7.4px;color:#111;transform:translate(464.30px,311.19px) rotate(0.05deg) scaleX(0.7775);">1</span>
<span class="t" style="font-size:7.4px;color:#111;transform:translate(585.30px,311.19px) rotate(0.05deg) scaleX(0.7775);">0</span>
<span class="t" style="font-size:7.4px;color:#111;transform:translate(7.40px,321.44px) rotate(0.05deg) scaleX(0.8542);">Configuration</span>
<span class="t" style="font-size:7.4px;color:#111;transform:translate(90.30px,321.44px) rotate(0.05deg) scaleX(0.8569);">optimize for ad hoc worklo…</span>
<span class="t" style="font-size:7.4px;color:#111;transform:translate(259.30px,321.44px) rotate(0.05deg) scaleX(0.8818);">value</span>
<span class="t" style="font-size:7.4px;color:#111;transform:translate(344.30px,321.44px) rotate(0.05deg) scaleX(0.7775);">0</span>
<span class="t" style="font-size:7.4px;color:#111;transform:translate(464.30px,321.44px) rotate(0.05deg) scaleX(0.7775);">1</span>
<span class="t" style="font-size:7.4px;color:#111;transform:translate(585.30px,321.44px) rotate(0.05deg) scaleX(0.7775);">1</span>
<span class="t" style="font-size:7.4px;color:#111;transform:translate(7.40px,331.69px) rotate(0.05deg) scaleX(0.8542);">Configuration</span>
<span class="t" style="font-size:7.4px;color:#111;transform:translate(90.30px,331.69px) rotate(0.05deg) scaleX(0.8501);">Database Mail XPs</span>
<span class="t" style="font-size:7.4px;color:#111;transform:translate(259.30px,331.69px) rotate(0.05deg) scaleX(0.8818);">value</span>
<span class="t" style="font-size:7.4px;color:#111;transform:translate(344.30px,331.69px) rotate(0.05deg) scaleX(0.7775);">0</span>
<span class="t" style="font-size:7.4px;color:#111;transform:translate(464.30px,331.69px) rotate(0.05deg) scaleX(0.7775);">1</span>
<span class="t" style="font-size:7.4px;color:#111;transform:translate(585.30px,331.69px) rotate(0.05deg) scaleX(0.7775);">0</span>
<span class="t" style="font-size:7.4px;color:#111;transform:translate(7.40px,341.69px) rotate(0.05deg) scaleX(0.8542);">Configuration</span>
<span class="t" style="font-size:7.4px;color:#111;transform:translate(90.30px,341.69px) rotate(0.05deg) scaleX(0.8575);">automatic soft-NUMA disa…</span>
<span class="t" style="font-size:7.4px;color:#111;transform:translate(259.30px,341.69px) rotate(0.05deg) scaleX(0.8818);">value</span>
<span class="t" style="font-size:7.4px;color:#111;transform:translate(344.30px,341.69px) rotate(0.05deg) scaleX(0.8256);">&lt;row missing from results&gt;</span>
<span class="t" style="font-size:7.4px;color:#111;transform:translate(464.30px,341.69px) rotate(0.05deg) scaleX(0.8256);">&lt;row missing from results&gt;</span>
<span class="t" style="font-size:7.4px;color:#111;transform:translate(585.30px,341.69px) rotate(0.05deg) scaleX(0.7775);">0</span>
<span class="t" style="font-size:7.4px;color:#111;transform:translate(7.40px,351.94px) rotate(0.05deg) scaleX(0.8542);">Configuration</span>
<span class="t" style="font-size:7.4px;color:#111;transform:translate(90.30px,351.94px) rotate(0.05deg) scaleX(0.8547);">external scripts enabled</span>
<span class="t" style="font-size:7.4px;color:#111;transform:translate(259.30px,351.94px) rotate(0.05deg) scaleX(0.8818);">value</span>
<span class="t" style="font-size:7.4px;color:#111;transform:translate(344.30px,351.94px) rotate(0.05deg) scaleX(0.8256);">&lt;row missing from results&gt;</span>
<span class="t" style="font-size:7.4px;color:#111;transform:translate(464.30px,351.94px) rotate(0.05deg) scaleX(0.8256);">&lt;row missing from results&gt;</span>
<span class="t" style="font-size:7.4px;color:#111;transform:translate(585.30px,351.94px) rotate(0.05deg) scaleX(0.7775);">0</span>
<span class="t" style="font-size:7.4px;color:#111;transform:translate(7.40px,362.19px) rotate(0.05deg) scaleX(0.8542);">Configuration</span>
<span class="t" style="font-size:7.4px;color:#111;transform:translate(90.30px,362.19px) rotate(0.05deg) scaleX(0.8836);">hadoop connectivity</span>
<span class="t" style="font-size:7.4px;color:#111;transform:translate(259.30px,362.19px) rotate(0.05deg) scaleX(0.8818);">value</span>
<span class="t" style="font-size:7.4px;color:#111;transform:translate(344.30px,362.19px) rotate(0.05deg) scaleX(0.8256);">&lt;row missing from results&gt;</span>
<span class="t" style="font-size:7.4px;color:#111;transform:translate(464.30px,362.19px) rotate(0.05deg) scaleX(0.8256);">&lt;row missing from results&gt;</span>
<span class="t" style="font-size:7.4px;color:#111;transform:translate(585.30px,362.19px) rotate(0.05deg) scaleX(0.7775);">0</span>
<span class="t" style="font-size:7.4px;color:#111;transform:translate(7.40px,372.44px) rotate(0.05deg) scaleX(0.8542);">Configuration</span>
<span class="t" style="font-size:7.4px;color:#111;transform:translate(90.30px,372.44px) rotate(0.05deg) scaleX(0.8574);">polybase network encrypti…</span>
<span class="t" style="font-size:7.4px;color:#111;transform:translate(259.30px,372.44px) rotate(0.05deg) scaleX(0.8818);">value</span>
<span class="t" style="font-size:7.4px;color:#111;transform:translate(344.30px,372.44px) rotate(0.05deg) scaleX(0.8256);">&lt;row missing from results&gt;</span>
<span class="t" style="font-size:7.4px;color:#111;transform:translate(464.30px,372.44px) rotate(0.05deg) scaleX(0.8256);">&lt;row missing from results&gt;</span>
<span class="t" style="font-size:7.4px;color:#111;transform:translate(585.30px,372.44px) rotate(0.05deg) scaleX(0.7775);">1</span>
<span class="t" style="font-size:7.4px;color:#111;transform:translate(7.40px,382.69px) rotate(0.05deg) scaleX(0.8542);">Configuration</span>
<span class="t" style="font-size:7.4px;color:#111;transform:translate(90.30px,382.69px) rotate(0.05deg) scaleX(0.8654);">remote data archive</span>
<span class="t" style="font-size:7.4px;color:#111;transform:translate(259.30px,382.69px) rotate(0.05deg) scaleX(0.8818);">value</span>
<span class="t" style="font-size:7.4px;color:#111;transform:translate(344.30px,382.69px) rotate(0.05deg) scaleX(0.8256);">&lt;row missing from results&gt;</span>
<span class="t" style="font-size:7.4px;color:#111;transform:translate(464.30px,382.69px) rotate(0.05deg) scaleX(0.8256);">&lt;row missing from results&gt;</span>
<span class="t" style="font-size:7.4px;color:#111;transform:translate(585.30px,382.69px) rotate(0.05deg) scaleX(0.7775);">0</span>
<span class="t" style="font-size:7.4px;color:#111;transform:translate(7.40px,392.94px) rotate(0.05deg) scaleX(0.8542);">Configuration</span>
<span class="t" style="font-size:7.4px;color:#111;transform:translate(90.30px,392.94px) rotate(0.05deg) scaleX(0.8607);">polybase mode</span>
<span class="t" style="font-size:7.4px;color:#111;transform:translate(259.30px,392.94px) rotate(0.05deg) scaleX(0.8818);">value</span>
<span class="t" style="font-size:7.4px;color:#111;transform:translate(344.30px,392.94px) rotate(0.05deg) scaleX(0.8256);">&lt;row missing from results&gt;</span>
<span class="t" style="font-size:7.4px;color:#111;transform:translate(464.30px,392.94px) rotate(0.05deg) scaleX(0.8256);">&lt;row missing from results&gt;</span>
<span class="t" style="font-size:7.4px;color:#111;transform:translate(585.30px,392.94px) rotate(0.05deg) scaleX(0.7775);">0</span>
<div class="abs" style="left:0;top:0;width:1.1px;height:404px;background:#ededed;"></div>
<div class="abs" style="left:1.1px;top:16px;width:0.9px;height:390px;background:#d9d9d9;"></div>
<div class="abs" style="left:698.7px;top:0;width:1.3px;height:404px;background:#ececec;"></div>
</div></body></html>
